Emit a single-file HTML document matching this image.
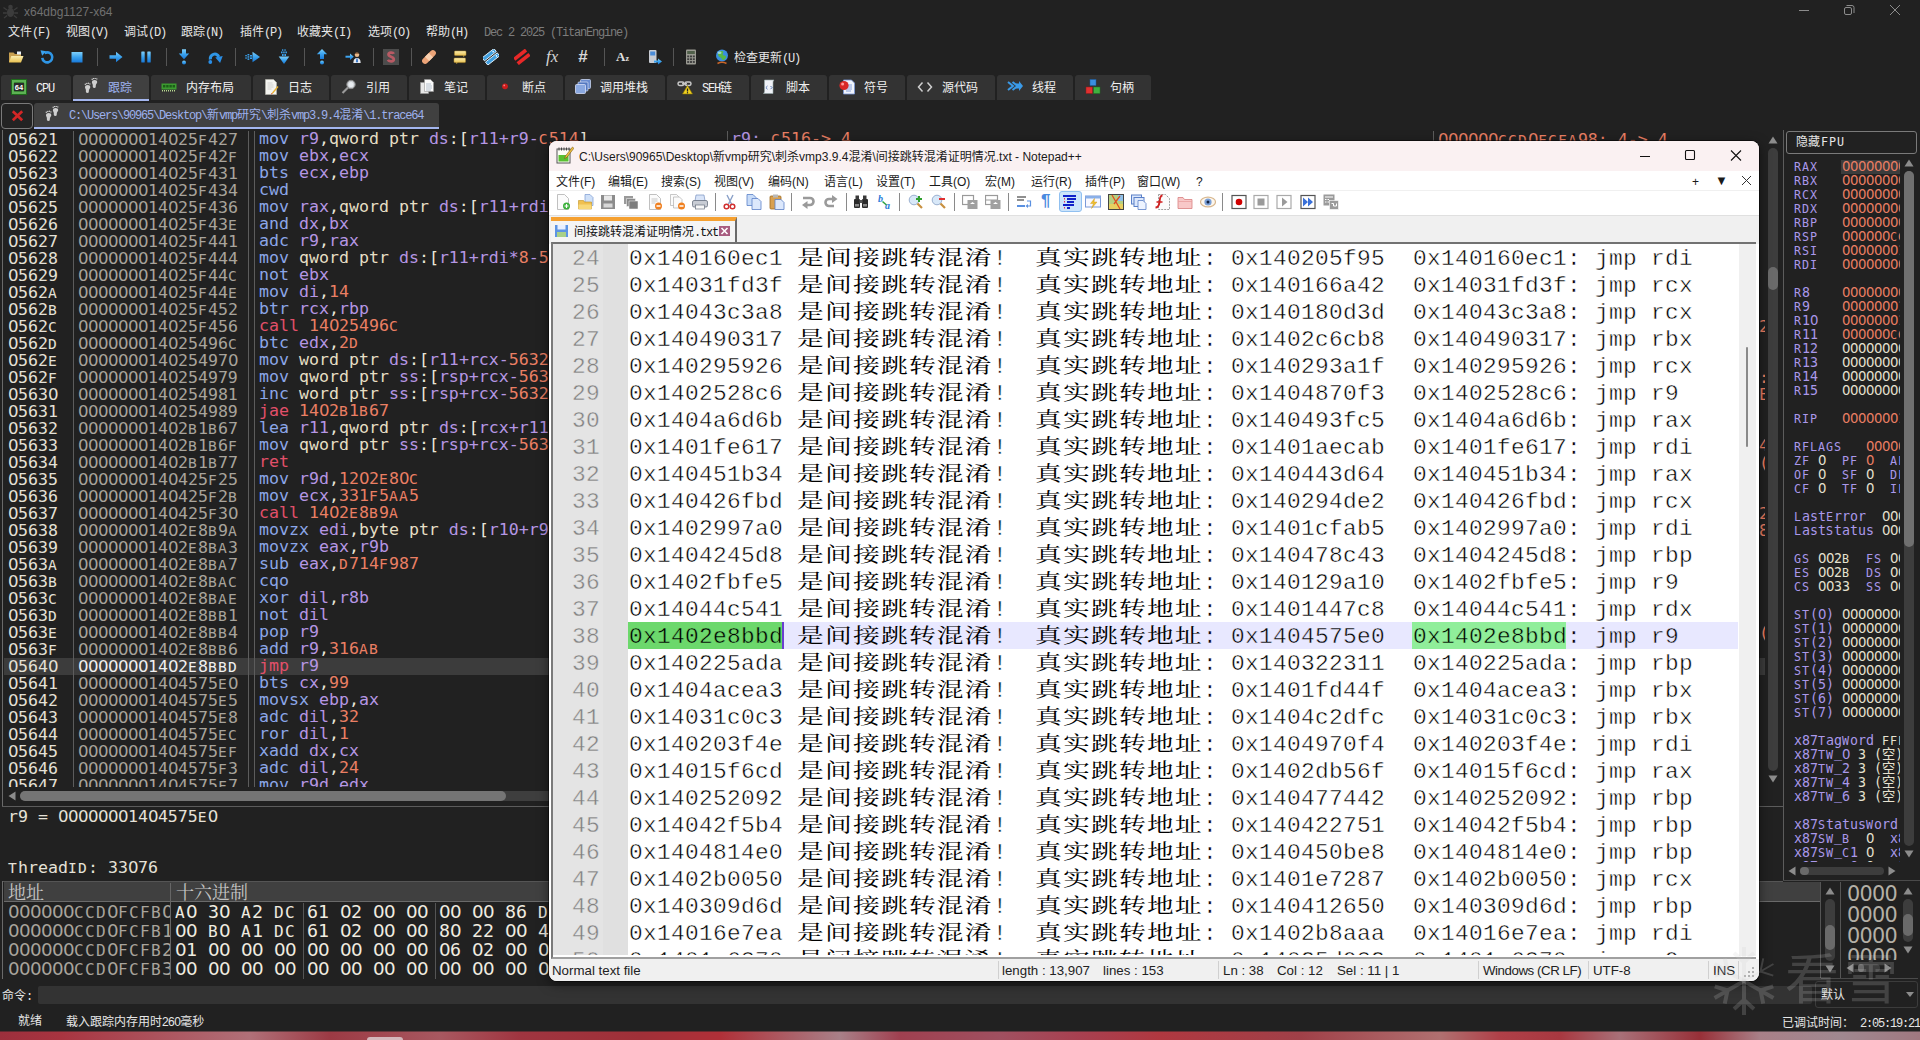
<!DOCTYPE html><html lang="zh"><head><meta charset="utf-8"><title>x64dbg</title><style>
*{box-sizing:border-box}
html,body{margin:0;padding:0}
body{width:1920px;height:1040px;background:#212121;position:relative;overflow:hidden;font-family:"Liberation Sans","Noto Sans CJK SC",sans-serif}
.a{position:absolute;white-space:pre}
.mono{font-family:"DejaVu Sans Mono","Liberation Mono",monospace}
.ui{font-family:"Liberation Mono","Noto Sans CJK SC",monospace;font-size:12px;color:#e6e6e6}
.dis{position:absolute;left:0;top:131px;width:1765px;height:656px;overflow:hidden;font-family:"DejaVu Sans Mono","Liberation Mono",monospace;font-size:16.6px;line-height:17px;letter-spacing:0}
.row{position:absolute;left:0;height:17px;width:1765px;white-space:pre}
.row span.c{position:absolute;top:0}
.row span.s{top:-1px}
.m{color:#8ba6e8}.j{color:#e2506a}.r{color:#b596e4}.n{color:#ea7f64}.k{color:#e6dfc4}.p{color:#e8e4d8}
.idx{color:#e4e0d6}.adr{color:#a8a49c}
.z{font-family:"DejaVu Sans",sans-serif;font-weight:normal;letter-spacing:-0.03418em}
.h{font-style:normal;font-size:.88em;letter-spacing:.0821em}
.vl{position:absolute;width:1px;background:#5c5c5c}
.hl{position:absolute;height:1px;background:#4a4a4a}
</style></head><body>
<div class="dis">
<div class="row" style="top:0px;">
<span class="c idx" style="left:8px"><b class="z">0</b>5621</span>
<span class="c adr" style="left:78px"><b class="z">0000000</b>14<b class="z">0</b>25<i class="h">F</i>427</span>
<span class="c s" style="left:259px"><span class="m">mov</span> <span class="r">r9</span><span class="p">,</span><span class="k">qword ptr </span><span class="r">ds</span><span class="p">:</span><span class="p">[</span><span class="r">r11</span><span class="r">+</span><span class="r">r9</span><span class="r">-</span><span class="n"><i class="h">C</i>514</span><span class="p">]</span></span>
<span class="c s" style="left:731px"><span class="r">r9: </span><span class="n"><i class="h">C</i>516-&gt; 4</span></span>
<span class="c n" style="left:1438px"><b class="z">000000</b><i class="h">CCD</i><b class="z">0</b><i class="h">FCFA</i>98: 4-&gt; 4</span>
</div>
<div class="row" style="top:17px;">
<span class="c idx" style="left:8px"><b class="z">0</b>5622</span>
<span class="c adr" style="left:78px"><b class="z">0000000</b>14<b class="z">0</b>25<i class="h">F</i>42<i class="h">F</i></span>
<span class="c s" style="left:259px"><span class="m">mov</span> <span class="r">ebx</span><span class="p">,</span><span class="r">ecx</span></span>
</div>
<div class="row" style="top:34px;">
<span class="c idx" style="left:8px"><b class="z">0</b>5623</span>
<span class="c adr" style="left:78px"><b class="z">0000000</b>14<b class="z">0</b>25<i class="h">F</i>431</span>
<span class="c s" style="left:259px"><span class="m">bts</span> <span class="r">ecx</span><span class="p">,</span><span class="r">ebp</span></span>
</div>
<div class="row" style="top:51px;">
<span class="c idx" style="left:8px"><b class="z">0</b>5624</span>
<span class="c adr" style="left:78px"><b class="z">0000000</b>14<b class="z">0</b>25<i class="h">F</i>434</span>
<span class="c s" style="left:259px"><span class="m">cwd</span></span>
</div>
<div class="row" style="top:68px;">
<span class="c idx" style="left:8px"><b class="z">0</b>5625</span>
<span class="c adr" style="left:78px"><b class="z">0000000</b>14<b class="z">0</b>25<i class="h">F</i>436</span>
<span class="c s" style="left:259px"><span class="m">mov</span> <span class="r">rax</span><span class="p">,</span><span class="k">qword ptr </span><span class="r">ds</span><span class="p">:</span><span class="p">[</span><span class="r">r11</span><span class="r">+</span><span class="r">rdi</span><span class="r">*</span><span class="n">8</span><span class="r">-</span><span class="n">5632</span><span class="p">]</span></span>
</div>
<div class="row" style="top:85px;">
<span class="c idx" style="left:8px"><b class="z">0</b>5626</span>
<span class="c adr" style="left:78px"><b class="z">0000000</b>14<b class="z">0</b>25<i class="h">F</i>43<i class="h">E</i></span>
<span class="c s" style="left:259px"><span class="m">and</span> <span class="r">dx</span><span class="p">,</span><span class="r">bx</span></span>
</div>
<div class="row" style="top:102px;">
<span class="c idx" style="left:8px"><b class="z">0</b>5627</span>
<span class="c adr" style="left:78px"><b class="z">0000000</b>14<b class="z">0</b>25<i class="h">F</i>441</span>
<span class="c s" style="left:259px"><span class="m">adc</span> <span class="r">r9</span><span class="p">,</span><span class="r">rax</span></span>
</div>
<div class="row" style="top:119px;">
<span class="c idx" style="left:8px"><b class="z">0</b>5628</span>
<span class="c adr" style="left:78px"><b class="z">0000000</b>14<b class="z">0</b>25<i class="h">F</i>444</span>
<span class="c s" style="left:259px"><span class="m">mov</span> <span class="k">qword ptr </span><span class="r">ds</span><span class="p">:</span><span class="p">[</span><span class="r">r11</span><span class="r">+</span><span class="r">rdi</span><span class="r">*</span><span class="n">8</span><span class="r">-</span><span class="n">5632</span><span class="p">]</span><span class="p">,</span><span class="r">r9</span></span>
</div>
<div class="row" style="top:136px;">
<span class="c idx" style="left:8px"><b class="z">0</b>5629</span>
<span class="c adr" style="left:78px"><b class="z">0000000</b>14<b class="z">0</b>25<i class="h">F</i>44<i class="h">C</i></span>
<span class="c s" style="left:259px"><span class="m">not</span> <span class="r">ebx</span></span>
</div>
<div class="row" style="top:153px;">
<span class="c idx" style="left:8px"><b class="z">0</b>562<i class="h">A</i></span>
<span class="c adr" style="left:78px"><b class="z">0000000</b>14<b class="z">0</b>25<i class="h">F</i>44<i class="h">E</i></span>
<span class="c s" style="left:259px"><span class="m">mov</span> <span class="r">di</span><span class="p">,</span><span class="n">14</span></span>
</div>
<div class="row" style="top:170px;">
<span class="c idx" style="left:8px"><b class="z">0</b>562<i class="h">B</i></span>
<span class="c adr" style="left:78px"><b class="z">0000000</b>14<b class="z">0</b>25<i class="h">F</i>452</span>
<span class="c s" style="left:259px"><span class="m">btr</span> <span class="r">rcx</span><span class="p">,</span><span class="r">rbp</span></span>
</div>
<div class="row" style="top:187px;">
<span class="c idx" style="left:8px"><b class="z">0</b>562<i class="h">C</i></span>
<span class="c adr" style="left:78px"><b class="z">0000000</b>14<b class="z">0</b>25<i class="h">F</i>456</span>
<span class="c s" style="left:259px"><span class="j">call</span> <span class="n">14<b class="z">0</b>25496<i class="h">C</i></span></span>
<span class="c n" style="left:1759px">2</span>
</div>
<div class="row" style="top:204px;">
<span class="c idx" style="left:8px"><b class="z">0</b>562<i class="h">D</i></span>
<span class="c adr" style="left:78px"><b class="z">0000000</b>14<b class="z">0</b>25496<i class="h">C</i></span>
<span class="c s" style="left:259px"><span class="m">btc</span> <span class="r">edx</span><span class="p">,</span><span class="n">2<i class="h">D</i></span></span>
</div>
<div class="row" style="top:221px;">
<span class="c idx" style="left:8px"><b class="z">0</b>562<i class="h">E</i></span>
<span class="c adr" style="left:78px"><b class="z">0000000</b>14<b class="z">0</b>25497<b class="z">0</b></span>
<span class="c s" style="left:259px"><span class="m">mov</span> <span class="k">word ptr </span><span class="r">ds</span><span class="p">:</span><span class="p">[</span><span class="r">r11</span><span class="r">+</span><span class="r">rcx</span><span class="r">-</span><span class="n">5632</span><span class="p">]</span><span class="p">,</span><span class="r">dx</span></span>
</div>
<div class="row" style="top:238px;">
<span class="c idx" style="left:8px"><b class="z">0</b>562<i class="h">F</i></span>
<span class="c adr" style="left:78px"><b class="z">0000000</b>14<b class="z">0</b>254979</span>
<span class="c s" style="left:259px"><span class="m">mov</span> <span class="k">qword ptr </span><span class="r">ss</span><span class="p">:</span><span class="p">[</span><span class="r">rsp</span><span class="r">+</span><span class="r">rcx</span><span class="r">-</span><span class="n">5632</span><span class="p">]</span><span class="p">,</span><span class="r">r9</span></span>
<span class="c n" style="left:1759px">:</span>
</div>
<div class="row" style="top:255px;">
<span class="c idx" style="left:8px"><b class="z">0</b>563<b class="z">0</b></span>
<span class="c adr" style="left:78px"><b class="z">0000000</b>14<b class="z">0</b>254981</span>
<span class="c s" style="left:259px"><span class="m">inc</span> <span class="k">word ptr </span><span class="r">ss</span><span class="p">:</span><span class="p">[</span><span class="r">rsp</span><span class="r">+</span><span class="r">rcx</span><span class="r">-</span><span class="n">5632</span><span class="p">]</span></span>
<span class="c n" style="left:1759px">E</span>
</div>
<div class="row" style="top:272px;">
<span class="c idx" style="left:8px"><b class="z">0</b>5631</span>
<span class="c adr" style="left:78px"><b class="z">0000000</b>14<b class="z">0</b>254989</span>
<span class="c s" style="left:259px"><span class="j">jae</span> <span class="n">14<b class="z">0</b>2<i class="h">B</i>1<i class="h">B</i>67</span></span>
</div>
<div class="row" style="top:289px;">
<span class="c idx" style="left:8px"><b class="z">0</b>5632</span>
<span class="c adr" style="left:78px"><b class="z">0000000</b>14<b class="z">0</b>2<i class="h">B</i>1<i class="h">B</i>67</span>
<span class="c s" style="left:259px"><span class="m">lea</span> <span class="r">r11</span><span class="p">,</span><span class="k">qword ptr </span><span class="r">ds</span><span class="p">:</span><span class="p">[</span><span class="r">rcx</span><span class="r">+</span><span class="r">r11</span><span class="r">-</span><span class="n">5632</span><span class="p">]</span></span>
</div>
<div class="row" style="top:306px;">
<span class="c idx" style="left:8px"><b class="z">0</b>5633</span>
<span class="c adr" style="left:78px"><b class="z">0000000</b>14<b class="z">0</b>2<i class="h">B</i>1<i class="h">B</i>6<i class="h">F</i></span>
<span class="c s" style="left:259px"><span class="m">mov</span> <span class="k">qword ptr </span><span class="r">ss</span><span class="p">:</span><span class="p">[</span><span class="r">rsp</span><span class="r">+</span><span class="r">rcx</span><span class="r">-</span><span class="n">5632</span><span class="p">]</span><span class="p">,</span><span class="r">rax</span></span>
<span class="c n" style="left:1759px">4</span>
</div>
<div class="row" style="top:323px;">
<span class="c idx" style="left:8px"><b class="z">0</b>5634</span>
<span class="c adr" style="left:78px"><b class="z">0000000</b>14<b class="z">0</b>2<i class="h">B</i>1<i class="h">B</i>77</span>
<span class="c s" style="left:259px"><span class="j">ret</span></span>
<span class="c n" style="left:1759px">(</span>
</div>
<div class="row" style="top:340px;">
<span class="c idx" style="left:8px"><b class="z">0</b>5635</span>
<span class="c adr" style="left:78px"><b class="z">0000000</b>14<b class="z">0</b>425<i class="h">F</i>25</span>
<span class="c s" style="left:259px"><span class="m">mov</span> <span class="r">r9d</span><span class="p">,</span><span class="n">12<b class="z">0</b>2<i class="h">E</i>8<b class="z">0</b><i class="h">C</i></span></span>
</div>
<div class="row" style="top:357px;">
<span class="c idx" style="left:8px"><b class="z">0</b>5636</span>
<span class="c adr" style="left:78px"><b class="z">0000000</b>14<b class="z">0</b>425<i class="h">F</i>2<i class="h">B</i></span>
<span class="c s" style="left:259px"><span class="m">mov</span> <span class="r">ecx</span><span class="p">,</span><span class="n">331<i class="h">F</i>5<i class="h">AA</i>5</span></span>
</div>
<div class="row" style="top:374px;">
<span class="c idx" style="left:8px"><b class="z">0</b>5637</span>
<span class="c adr" style="left:78px"><b class="z">0000000</b>14<b class="z">0</b>425<i class="h">F</i>3<b class="z">0</b></span>
<span class="c s" style="left:259px"><span class="j">call</span> <span class="n">14<b class="z">0</b>2<i class="h">E</i>8<i class="h">B</i>9<i class="h">A</i></span></span>
<span class="c n" style="left:1759px">2</span>
</div>
<div class="row" style="top:391px;">
<span class="c idx" style="left:8px"><b class="z">0</b>5638</span>
<span class="c adr" style="left:78px"><b class="z">0000000</b>14<b class="z">0</b>2<i class="h">E</i>8<i class="h">B</i>9<i class="h">A</i></span>
<span class="c s" style="left:259px"><span class="m">movzx</span> <span class="r">edi</span><span class="p">,</span><span class="k">byte ptr </span><span class="r">ds</span><span class="p">:</span><span class="p">[</span><span class="r">r10</span><span class="r">+</span><span class="r">r9</span><span class="p">]</span></span>
<span class="c n" style="left:1759px">8</span>
</div>
<div class="row" style="top:408px;">
<span class="c idx" style="left:8px"><b class="z">0</b>5639</span>
<span class="c adr" style="left:78px"><b class="z">0000000</b>14<b class="z">0</b>2<i class="h">E</i>8<i class="h">BA</i>3</span>
<span class="c s" style="left:259px"><span class="m">movzx</span> <span class="r">eax</span><span class="p">,</span><span class="r">r9b</span></span>
</div>
<div class="row" style="top:425px;">
<span class="c idx" style="left:8px"><b class="z">0</b>563<i class="h">A</i></span>
<span class="c adr" style="left:78px"><b class="z">0000000</b>14<b class="z">0</b>2<i class="h">E</i>8<i class="h">BA</i>7</span>
<span class="c s" style="left:259px"><span class="m">sub</span> <span class="r">eax</span><span class="p">,</span><span class="n"><i class="h">D</i>714<i class="h">F</i>987</span></span>
</div>
<div class="row" style="top:442px;">
<span class="c idx" style="left:8px"><b class="z">0</b>563<i class="h">B</i></span>
<span class="c adr" style="left:78px"><b class="z">0000000</b>14<b class="z">0</b>2<i class="h">E</i>8<i class="h">BAC</i></span>
<span class="c s" style="left:259px"><span class="m">cqo</span></span>
</div>
<div class="row" style="top:459px;">
<span class="c idx" style="left:8px"><b class="z">0</b>563<i class="h">C</i></span>
<span class="c adr" style="left:78px"><b class="z">0000000</b>14<b class="z">0</b>2<i class="h">E</i>8<i class="h">BAE</i></span>
<span class="c s" style="left:259px"><span class="m">xor</span> <span class="r">dil</span><span class="p">,</span><span class="r">r8b</span></span>
</div>
<div class="row" style="top:476px;">
<span class="c idx" style="left:8px"><b class="z">0</b>563<i class="h">D</i></span>
<span class="c adr" style="left:78px"><b class="z">0000000</b>14<b class="z">0</b>2<i class="h">E</i>8<i class="h">BB</i>1</span>
<span class="c s" style="left:259px"><span class="m">not</span> <span class="r">dil</span></span>
</div>
<div class="row" style="top:493px;">
<span class="c idx" style="left:8px"><b class="z">0</b>563<i class="h">E</i></span>
<span class="c adr" style="left:78px"><b class="z">0000000</b>14<b class="z">0</b>2<i class="h">E</i>8<i class="h">BB</i>4</span>
<span class="c s" style="left:259px"><span class="m">pop</span> <span class="r">r9</span></span>
<span class="c n" style="left:1759px">(</span>
</div>
<div class="row" style="top:510px;">
<span class="c idx" style="left:8px"><b class="z">0</b>563<i class="h">F</i></span>
<span class="c adr" style="left:78px"><b class="z">0000000</b>14<b class="z">0</b>2<i class="h">E</i>8<i class="h">BB</i>6</span>
<span class="c s" style="left:259px"><span class="m">add</span> <span class="r">r9</span><span class="p">,</span><span class="n">316<i class="h">AB</i></span></span>
</div>
<div class="row" style="top:527px;background:#3c3c3c;">
<span class="c idx" style="left:8px"><b class="z">0</b>564<b class="z">0</b></span>
<span class="c adr" style="left:78px;color:#f0f0f0"><b class="z">0000000</b>14<b class="z">0</b>2<i class="h">E</i>8<i class="h">BBD</i></span>
<span class="c s" style="left:259px"><span class="j">jmp</span> <span class="r">r9</span></span>
</div>
<div class="row" style="top:544px;">
<span class="c idx" style="left:8px"><b class="z">0</b>5641</span>
<span class="c adr" style="left:78px"><b class="z">0000000</b>14<b class="z">0</b>4575<i class="h">E</i><b class="z">0</b></span>
<span class="c s" style="left:259px"><span class="m">bts</span> <span class="r">cx</span><span class="p">,</span><span class="n">99</span></span>
</div>
<div class="row" style="top:561px;">
<span class="c idx" style="left:8px"><b class="z">0</b>5642</span>
<span class="c adr" style="left:78px"><b class="z">0000000</b>14<b class="z">0</b>4575<i class="h">E</i>5</span>
<span class="c s" style="left:259px"><span class="m">movsx</span> <span class="r">ebp</span><span class="p">,</span><span class="r">ax</span></span>
</div>
<div class="row" style="top:578px;">
<span class="c idx" style="left:8px"><b class="z">0</b>5643</span>
<span class="c adr" style="left:78px"><b class="z">0000000</b>14<b class="z">0</b>4575<i class="h">E</i>8</span>
<span class="c s" style="left:259px"><span class="m">adc</span> <span class="r">dil</span><span class="p">,</span><span class="n">32</span></span>
</div>
<div class="row" style="top:595px;">
<span class="c idx" style="left:8px"><b class="z">0</b>5644</span>
<span class="c adr" style="left:78px"><b class="z">0000000</b>14<b class="z">0</b>4575<i class="h">EC</i></span>
<span class="c s" style="left:259px"><span class="m">ror</span> <span class="r">dil</span><span class="p">,</span><span class="n">1</span></span>
</div>
<div class="row" style="top:612px;">
<span class="c idx" style="left:8px"><b class="z">0</b>5645</span>
<span class="c adr" style="left:78px"><b class="z">0000000</b>14<b class="z">0</b>4575<i class="h">EF</i></span>
<span class="c s" style="left:259px"><span class="m">xadd</span> <span class="r">dx</span><span class="p">,</span><span class="r">cx</span></span>
</div>
<div class="row" style="top:629px;">
<span class="c idx" style="left:8px"><b class="z">0</b>5646</span>
<span class="c adr" style="left:78px"><b class="z">0000000</b>14<b class="z">0</b>4575<i class="h">F</i>3</span>
<span class="c s" style="left:259px"><span class="m">adc</span> <span class="r">dil</span><span class="p">,</span><span class="n">24</span></span>
</div>
<div class="row" style="top:646px;">
<span class="c idx" style="left:8px"><b class="z">0</b>5647</span>
<span class="c adr" style="left:78px"><b class="z">0000000</b>14<b class="z">0</b>4575<i class="h">F</i>7</span>
<span class="c s" style="left:259px"><span class="m">mov</span> <span class="r">r9d</span><span class="p">,</span><span class="r">edx</span></span>
</div>
<div class="vl" style="left:73px;top:0;height:656px"></div>
<div class="vl" style="left:248px;top:0;height:656px"></div>
<div class="vl" style="left:254px;top:0;height:656px"></div>
<div class="vl" style="left:727px;top:0;height:656px"></div>
<div class="vl" style="left:1433px;top:0;height:656px"></div>
</div>
<style>.l{letter-spacing:-1.2px}.ui{line-height:14px}</style>
<svg class="a" style="left:2px;top:3px" width="17" height="16" viewBox="0 0 17 16"><g fill="#3c3c3c"><ellipse cx="8.5" cy="9.5" rx="3.6" ry="4.6"/><circle cx="8.5" cy="4" r="2.3"/></g><g stroke="#3c3c3c" stroke-width="1.3" fill="none"><path d="M5 7 L1.5 4.5M12 7l3.5-2.5M4.8 10H1M12.2 10H16M5.2 12.5L2 15M11.8 12.5L15 15"/></g></svg>
<span class="a" style="left:24px;top:5px;font:12px/14px 'Liberation Sans',sans-serif;color:#707070">x64dbg1127-x64</span>
<svg class="a" style="left:1790px;top:0" width="130" height="22" viewBox="0 0 130 22"><g stroke="#8c8c8c" stroke-width="1" fill="none"><path d="M9 10.5h10"/><rect x="54.5" y="7.5" width="7" height="7" rx="1.5"/><path d="M56.5 5.5h5.5a2 2 0 0 1 2 2v5.5"/><path d="M100 5l10 10M110 5l-10 10"/></g></svg>
<span class="a ui" style="left:8px;top:26px;color:#e6e6e6;">文件<span class="l">(F)</span></span>
<span class="a ui" style="left:66px;top:26px;color:#e6e6e6;">视图<span class="l">(V)</span></span>
<span class="a ui" style="left:124px;top:26px;color:#e6e6e6;">调试<span class="l">(D)</span></span>
<span class="a ui" style="left:181px;top:26px;color:#e6e6e6;">跟踪<span class="l">(N)</span></span>
<span class="a ui" style="left:240px;top:26px;color:#e6e6e6;">插件<span class="l">(P)</span></span>
<span class="a ui" style="left:297px;top:26px;color:#e6e6e6;">收藏夹<span class="l">(I)</span></span>
<span class="a ui" style="left:368px;top:26px;color:#e6e6e6;">选项<span class="l">(O)</span></span>
<span class="a ui" style="left:426px;top:26px;color:#e6e6e6;">帮助<span class="l">(H)</span></span>
<span class="a ui" style="left:484px;top:26px;color:#7c7c7c;"><span class="l">Dec 2 2025 (TitanEngine)</span></span>
<svg width="0" height="0" style="position:absolute"><defs><linearGradient id="gb" x1="0" y1="0" x2="0" y2="1"><stop offset="0" stop-color="#7fd0fb"/><stop offset=".5" stop-color="#3aa2ee"/><stop offset="1" stop-color="#1878d8"/></linearGradient><linearGradient id="gy" x1="0" y1="0" x2="0" y2="1"><stop offset="0" stop-color="#fbeeb0"/><stop offset="1" stop-color="#e8c050"/></linearGradient></defs></svg>
<svg class="a" style="left:8px;top:49px" width="16" height="16" viewBox="0 0 16 16"><path d="M1 3.500h4.500l1.500 1.500H13V13H1z" fill="#c8a050"/><path d="M9 2.500h4v3h-4z" fill="#e8f0f8"/><path d="M1 13.500l2.300-6.500H15.500L13 13.500z" fill="url(#gy)"/></svg>
<svg class="a" style="left:39px;top:49px" width="16" height="16" viewBox="0 0 16 16"><path d="M3.300 8.800a5 5 0 1 0 2.200-4.600" fill="none" stroke="#2f96e6" stroke-width="2.600"/><path d="M1.500 1.200l5.500 1-3.800 4.600z" fill="#3aa2ee"/></svg>
<svg class="a" style="left:69px;top:49px" width="16" height="16" viewBox="0 0 16 16"><rect x="2.500" y="3" width="11" height="10.500" fill="url(#gb)"/></svg>
<svg class="a" style="left:108px;top:49px" width="16" height="16" viewBox="0 0 16 16"><path d="M1.500 6.300h6.500v-3.600l6.500 5.300-6.500 5.300v-3.600h-6.500z" fill="url(#gb)"/></svg>
<svg class="a" style="left:138px;top:49px" width="16" height="16" viewBox="0 0 16 16"><rect x="3.300" y="2.500" width="3.400" height="11" rx=".6" fill="url(#gb)"/><rect x="9.300" y="2.500" width="3.400" height="11" rx=".6" fill="url(#gb)"/></svg>
<svg class="a" style="left:176px;top:49px" width="16" height="16" viewBox="0 0 16 16"><path d="M6 0.300h4v4.200h3.200l-5.200 5.700-5.200-5.700h3.200z" fill="url(#gb)"/><circle cx="8" cy="13.500" r="2" fill="url(#gb)"/></svg>
<svg class="a" style="left:207px;top:49px" width="16" height="16" viewBox="0 0 16 16"><path d="M3.300 10.500c-.5-5.500 6-7.500 8.500-2.500" fill="none" stroke="#2f96e6" stroke-width="3"/><path d="M8.300 8.500l7.400-1.500-2.600 7z" fill="#2a8ee6"/><circle cx="3.300" cy="13" r="1.900" fill="#2a8ee6"/></svg>
<svg class="a" style="left:245px;top:49px" width="16" height="16" viewBox="0 0 16 16"><path d="M7.500 6v-3.300l7.500 5.300-7.500 5.300v-3.300z" fill="url(#gb)"/><g fill="#3aa2ee"><rect x="5" y="6" width="2" height="1.600"/><rect x="5" y="8.400" width="2" height="1.600"/><rect x="2.500" y="5" width="1.800" height="1.500"/><rect x="2.500" y="7.200" width="1.800" height="1.500"/><rect x="2.500" y="9.400" width="1.800" height="1.500"/><rect x="0.300" y="6" width="1.500" height="1.300"/><rect x="0.300" y="8.400" width="1.500" height="1.300"/></g></svg>
<svg class="a" style="left:276px;top:49px" width="16" height="16" viewBox="0 0 16 16"><path d="M6 7.500h-3.300l5.300 7.500 5.300-7.500h-3.300z" fill="url(#gb)"/><g fill="#3aa2ee"><rect x="6" y="5" width="1.600" height="2"/><rect x="8.400" y="5" width="1.600" height="2"/><rect x="5" y="2.500" width="1.500" height="1.800"/><rect x="7.200" y="2.500" width="1.500" height="1.800"/><rect x="9.400" y="2.500" width="1.500" height="1.800"/><rect x="6" y="0.300" width="1.300" height="1.500"/><rect x="8.400" y="0.300" width="1.300" height="1.500"/></g></svg>
<svg class="a" style="left:314px;top:49px" width="16" height="16" viewBox="0 0 16 16"><path d="M6 10v-4.800h-3.200l5.200-5.200 5.200 5.200h-3.200v4.800z" fill="url(#gb)"/><circle cx="8" cy="13.500" r="2" fill="url(#gb)"/></svg>
<svg class="a" style="left:345px;top:49px" width="16" height="16" viewBox="0 0 16 16"><path d="M0.500 6.800h4.500v-2.300l3.800 3.300-3.800 3.300v-2.300h-4.500z" fill="url(#gb)"/><circle cx="12" cy="5.800" r="2.300" fill="#e8b88a"/><path d="M9.800 5c.4-2 4-2 4.400 0-.8-.8-3.600-.8-4.400 0z" fill="#6a4020"/><path d="M8.300 14c0-3.300 1.500-5 3.700-5s3.700 1.700 3.700 5z" fill="#e4e8ee"/><path d="M11.300 9.500h1.400l.4 3.300-1.100 1-1.100-1z" fill="#3a78c8"/></svg>
<svg class="a" style="left:383px;top:49px" width="16" height="16" viewBox="0 0 16 16"><rect x="0" y="0" width="16" height="16" fill="#4c4c4c"/><path d="M10.800 4.800c-.8-1.700-5.300-1.900-5.300 .8 0 2.600 5.300 1.700 5.300 4.700 0 2.700-4.800 2.600-6 .6" fill="none" stroke="#b85a64" stroke-width="2.700"/></svg>
<svg class="a" style="left:421px;top:49px" width="16" height="16" viewBox="0 0 16 16"><g transform="rotate(-45 8 8)"><rect x="-.5" y="5" width="17" height="6" rx="3" fill="#eca478"/><rect x="5.300" y="5" width="5.400" height="6" fill="#f8d0b0"/></g></svg>
<svg class="a" style="left:452px;top:49px" width="16" height="16" viewBox="0 0 16 16"><rect x="2.500" y="2" width="11.500" height="4.600" rx=".8" fill="url(#gy)" stroke="#b89030" stroke-width=".5"/><path d="M11 6.600l.8 1.500 .8-1.500z" fill="#e8c050"/><rect x="2" y="9" width="11.500" height="4.600" rx=".8" fill="url(#gy)" stroke="#b89030" stroke-width=".5"/><path d="M4 13.600l.8 1.500 .8-1.500z" fill="#e8c050"/></svg>
<svg class="a" style="left:483px;top:49px" width="16" height="16" viewBox="0 0 16 16"><g transform="rotate(-38 8 8)"><rect x="0.500" y="3.200" width="15" height="3.800" fill="#3f9fe0" stroke="#e0f0fa" stroke-width=".9"/><rect x="0.500" y="8.600" width="15" height="3.800" fill="#3f9fe0" stroke="#e0f0fa" stroke-width=".9"/><circle cx="13" cy="5.100" r=".8" fill="#fff"/><circle cx="13" cy="10.500" r=".8" fill="#fff"/></g></svg>
<svg class="a" style="left:514px;top:49px" width="16" height="16" viewBox="0 0 16 16"><g transform="rotate(-38 8 8)"><rect x="0.500" y="3.200" width="15" height="3.600" fill="#e82828"/><rect x="0.500" y="8.800" width="15" height="3.600" fill="#e82828"/></g></svg>
<span class="a" style="left:546px;top:46px;font:italic 17px/22px 'Liberation Serif',serif;color:#d4d4d4">fx</span>
<span class="a" style="left:578px;top:47px;font:italic bold 17px/20px 'Liberation Sans',sans-serif;color:#d8d8d8">#</span>
<span class="a" style="left:616px;top:48px;font:bold 13px/18px 'Liberation Serif',serif;color:#e0e0e0">A<span style="font-size:8px">z</span></span>
<svg class="a" style="left:647px;top:49px" width="16" height="16" viewBox="0 0 16 16"><rect x="2" y="1" width="7.500" height="13" rx="1" fill="#c8ccd4"/><rect x="3.200" y="2.500" width="5" height="4" fill="#4a8cd8"/><path d="M7 11.500h4v-2l4 3-4 3v-2h-4z" fill="url(#gb)"/></svg>
<svg class="a" style="left:683px;top:49px" width="16" height="16" viewBox="0 0 16 16"><rect x="3" y="0.500" width="10" height="15" rx="1" fill="#9a9a92"/><rect x="4.200" y="2" width="7.600" height="3" fill="#50604a"/><g fill="#3c3c3c"><rect x="4.200" y="6.500" width="2" height="1.800"/><rect x="7" y="6.500" width="2" height="1.800"/><rect x="9.800" y="6.500" width="2" height="1.800"/><rect x="4.200" y="9.300" width="2" height="1.800"/><rect x="7" y="9.300" width="2" height="1.800"/><rect x="9.800" y="9.300" width="2" height="1.800"/><rect x="4.200" y="12.100" width="2" height="1.800"/><rect x="7" y="12.100" width="2" height="1.800"/><rect x="9.800" y="12.100" width="2" height="1.800"/></g></svg>
<svg class="a" style="left:714px;top:49px" width="16" height="16" viewBox="0 0 16 16"><circle cx="8" cy="6.500" r="6" fill="#3a8ee0"/><path d="M4 4c1.500-2 4-2.500 5-1.500s-1 2.500 0 3.500 2.500 0 3 1.500-1.500 3.500-3 3.500-1-2-2.500-2.500-3-2-2.500-4.500z" fill="#58b848"/><ellipse cx="5.500" cy="3.800" rx="2" ry="1.200" fill="#bfe0ff" opacity=".7"/><path d="M3.500 14.500q4.500-2.500 9 0" stroke="#c86428" stroke-width="1.600" fill="none"/></svg>
<span class="a ui" style="left:734px;top:52px;color:#e6e6e6;">检查更新<span class="l">(U)</span></span>
<div class="a" style="left:97px;top:48px;width:1px;height:18px;background:#555"></div>
<div class="a" style="left:166px;top:48px;width:1px;height:18px;background:#555"></div>
<div class="a" style="left:235px;top:48px;width:1px;height:18px;background:#555"></div>
<div class="a" style="left:304px;top:48px;width:1px;height:18px;background:#555"></div>
<div class="a" style="left:373px;top:48px;width:1px;height:18px;background:#555"></div>
<div class="a" style="left:411px;top:48px;width:1px;height:18px;background:#555"></div>
<div class="a" style="left:604px;top:48px;width:1px;height:18px;background:#555"></div>
<div class="a" style="left:673px;top:48px;width:1px;height:18px;background:#555"></div>
<div class="a" style="left:1px;top:75px;width:70px;height:25px;background:#333333;border-radius:3px 3px 0 0;"></div>
<svg class="a" style="left:11px;top:79px" width="16" height="16" viewBox="0 0 16 16"><rect x="0.500" y="0.500" width="15" height="15" fill="#3fa03a" stroke="#1f6a1c"/><rect x="2.800" y="3.800" width="10.400" height="8.400" rx="1" fill="#2a2a2a"/><path d="M2 1.500v1M4 1.500v1M6 1.500v1M8 1.500v1M10 1.500v1M12 1.500v1M14 1.500v1M2 13.500v1M4 13.500v1M6 13.500v1M8 13.500v1M10 13.500v1M12 13.500v1M14 13.500v1M1.500 4h1M1.500 6h1M1.500 8h1M1.500 10h1M1.500 12h1M13.500 4h1M13.500 6h1M13.500 8h1M13.500 10h1M13.500 12h1" stroke="#c8f0b0" stroke-width=".9"/><text x="8" y="10.800" font-family="Liberation Sans,sans-serif" font-weight="bold" font-size="7.500" fill="#fff" text-anchor="middle">64</text></svg>
<span class="a ui" style="left:36px;top:82px;color:#f0f0f0;"><span class="l">CPU</span></span>
<div class="a" style="left:73px;top:75px;width:76px;height:26px;background:#404040;border-radius:3px 3px 0 0;border-bottom:2px solid #a4b6ee;"></div>
<svg class="a" style="left:83px;top:78px" width="16" height="16" viewBox="0 0 16 16"><g fill="#cfcfcf"><path d="M2 9.200c0-1.500 1.200-2.300 2.700-2.300s2.700 .8 2.600 2.300c-.1 1.300-1.300 1.900-1.400 3.200-.1 1.200 .2 2.500-1.400 2.500s-1.700-1.300-1.600-2.500c.1-1.300-.9-1.900-.9-3.200z"/><circle cx="2.300" cy="6.300" r=".75"/><circle cx="3.800" cy="5.500" r=".75"/><circle cx="5.400" cy="5.300" r=".75"/><circle cx="6.900" cy="5.900" r=".7"/><g transform="translate(6.900 -5)"><path d="M2 9.200c0-1.500 1.200-2.300 2.700-2.300s2.700 .8 2.600 2.300c-.1 1.300-1.300 1.900-1.400 3.200-.1 1.200 .2 2.500-1.400 2.500s-1.700-1.300-1.600-2.500c.1-1.300-.9-1.900-.9-3.200z"/><circle cx="2.300" cy="6.300" r=".75"/><circle cx="3.800" cy="5.500" r=".75"/><circle cx="5.400" cy="5.300" r=".75"/><circle cx="6.900" cy="5.900" r=".7"/></g></g></svg>
<span class="a ui" style="left:108px;top:82px;color:#9db1ee;">跟踪</span>
<div class="a" style="left:151px;top:75px;width:100px;height:25px;background:#333333;border-radius:3px 3px 0 0;"></div>
<svg class="a" style="left:161px;top:79px" width="16" height="16" viewBox="0 0 16 16"><rect x="0.500" y="4.500" width="15" height="6" fill="#3c9c30"/><g fill="#1c5c18"><rect x="2" y="6" width="2.400" height="2.500"/><rect x="5.200" y="6" width="2.400" height="2.500"/><rect x="8.400" y="6" width="2.400" height="2.500"/><rect x="11.600" y="6" width="2.400" height="2.500"/></g><path d="M1.500 11v1.500M3.500 11v1.500M5.500 11v1.500M7.500 11v1.500M9.500 11v1.500M11.500 11v1.500M13.500 11v1.500" stroke="#b8d890" stroke-width="1"/></svg>
<span class="a ui" style="left:186px;top:82px;color:#f0f0f0;">内存布局</span>
<div class="a" style="left:253px;top:75px;width:76px;height:25px;background:#333333;border-radius:3px 3px 0 0;"></div>
<svg class="a" style="left:263px;top:79px" width="16" height="16" viewBox="0 0 16 16"><path d="M2.500 0.500h8l3 3v12h-11z" fill="#f4f4f0" stroke="#b8b8b0" stroke-width=".6"/><path d="M4.500 4h5M4.500 6h6M4.500 8h6M4.500 10h4" stroke="#c0c0c0" stroke-width=".7"/><path d="M14.500 7l-5 6-1.500 2.500 2.500-1.500 5-6z" fill="#e8b030"/><path d="M8 15.500l.6-1.600 1 .9z" fill="#d04020"/></svg>
<span class="a ui" style="left:288px;top:82px;color:#f0f0f0;">日志</span>
<div class="a" style="left:331px;top:75px;width:76px;height:25px;background:#333333;border-radius:3px 3px 0 0;"></div>
<svg class="a" style="left:341px;top:79px" width="16" height="16" viewBox="0 0 16 16"><circle cx="10" cy="5.500" r="4.200" fill="#c8ccd0" stroke="#888" stroke-width="1"/><circle cx="10" cy="5.500" r="2.600" fill="#e8ecf0"/><path d="M7 8.500l-5.500 5.500" stroke="#9a9a9a" stroke-width="2.200"/></svg>
<span class="a ui" style="left:366px;top:82px;color:#f0f0f0;">引用</span>
<div class="a" style="left:409px;top:75px;width:76px;height:25px;background:#333333;border-radius:3px 3px 0 0;"></div>
<svg class="a" style="left:419px;top:79px" width="16" height="16" viewBox="0 0 16 16"><path d="M1.500 3.500h8v11h-8z" fill="#e8e8e8" stroke="#999" stroke-width=".6"/><path d="M5.500 0.500h6l3 3v9h-9z" fill="#fafafa" stroke="#999" stroke-width=".6"/><path d="M7 5h5M7 7h6M7 9h6M7 11h5" stroke="#9ab" stroke-width=".7"/></svg>
<span class="a ui" style="left:444px;top:82px;color:#f0f0f0;">笔记</span>
<div class="a" style="left:487px;top:75px;width:76px;height:25px;background:#333333;border-radius:3px 3px 0 0;"></div>
<svg class="a" style="left:497px;top:79px" width="16" height="16" viewBox="0 0 16 16"><circle cx="8" cy="7.300" r="2.900" fill="#cc1c1c"/><circle cx="7.200" cy="6.400" r=".9" fill="#f08080"/></svg>
<span class="a ui" style="left:522px;top:82px;color:#f0f0f0;">断点</span>
<div class="a" style="left:565px;top:75px;width:100px;height:25px;background:#333333;border-radius:3px 3px 0 0;"></div>
<svg class="a" style="left:575px;top:79px" width="16" height="16" viewBox="0 0 16 16"><rect x="5.500" y="0.500" width="10" height="9" rx="1" fill="#6a8cd0" stroke="#c8d4f0" stroke-width=".8"/><rect x="3" y="3" width="10" height="9" rx="1" fill="#5478c0" stroke="#c8d4f0" stroke-width=".8"/><rect x="0.500" y="5.500" width="10" height="9" rx="1" fill="#8aa8e0" stroke="#d8e0f8" stroke-width=".8"/></svg>
<span class="a ui" style="left:600px;top:82px;color:#f0f0f0;">调用堆栈</span>
<div class="a" style="left:667px;top:75px;width:82px;height:25px;background:#333333;border-radius:3px 3px 0 0;"></div>
<svg class="a" style="left:677px;top:79px" width="16" height="16" viewBox="0 0 16 16"><g fill="none" stroke="#c8c8c8" stroke-width="1.500"><rect x="1" y="3" width="6" height="3.500" rx="1.700"/><rect x="8" y="3" width="6" height="3.500" rx="1.700"/><path d="M5 4.800h5"/></g><path d="M10.500 6.500l5 8.500h-10z" fill="#f0d020" stroke="#8a7400" stroke-width=".6"/><path d="M10.500 9.500v3" stroke="#222" stroke-width="1.300"/><circle cx="10.500" cy="13.800" r=".7" fill="#222"/></svg>
<span class="a ui" style="left:702px;top:82px;color:#f0f0f0;"><span class="l">SEH</span>链</span>
<div class="a" style="left:751px;top:75px;width:76px;height:25px;background:#333333;border-radius:3px 3px 0 0;"></div>
<svg class="a" style="left:761px;top:79px" width="16" height="16" viewBox="0 0 16 16"><path d="M3.500 1h9.500c-1 1-1 2-1 3v10.500h-9.500c1-1 1-2 1-3z" fill="#f0f2f8" stroke="#9aa" stroke-width=".6"/><path d="M6.500 7l-1.600 1.600 1.600 1.600M9.500 7l1.600 1.600-1.600 1.600" fill="none" stroke="#5a7ab8" stroke-width="1"/></svg>
<span class="a ui" style="left:786px;top:82px;color:#f0f0f0;">脚本</span>
<div class="a" style="left:829px;top:75px;width:76px;height:25px;background:#333333;border-radius:3px 3px 0 0;"></div>
<svg class="a" style="left:839px;top:79px" width="16" height="16" viewBox="0 0 16 16"><path d="M4.500 1h8l3 3v11h-11z" fill="#f0f4fc" stroke="#7a98d8" stroke-width=".8"/><path d="M7 6h6M7 8h6M7 10h6M7 12h5" stroke="#6a8ad0" stroke-width=".8"/><circle cx="5" cy="6.500" r="4.600" fill="#d82828"/><circle cx="3.600" cy="5" r="1.500" fill="#ff9a9a"/></svg>
<span class="a ui" style="left:864px;top:82px;color:#f0f0f0;">符号</span>
<div class="a" style="left:907px;top:75px;width:88px;height:25px;background:#333333;border-radius:3px 3px 0 0;"></div>
<svg class="a" style="left:917px;top:79px" width="16" height="16" viewBox="0 0 16 16"><path d="M5.500 3.500l-4 4.500 4 4.500M10.500 3.500l4 4.500-4 4.500" fill="none" stroke="#d0d0d0" stroke-width="1.500"/></svg>
<span class="a ui" style="left:942px;top:82px;color:#f0f0f0;">源代码</span>
<div class="a" style="left:997px;top:75px;width:76px;height:25px;background:#333333;border-radius:3px 3px 0 0;"></div>
<svg class="a" style="left:1007px;top:79px" width="16" height="16" viewBox="0 0 16 16"><path d="M1 3l5 4-5 4M5.500 3l5 4-5 4" fill="none" stroke="#3a9ae8" stroke-width="2"/><path d="M9 4.500h3v-2.500l4 5-4 5v-2.500h-3z" fill="#3a9ae8"/></svg>
<span class="a ui" style="left:1032px;top:82px;color:#f0f0f0;">线程</span>
<div class="a" style="left:1075px;top:75px;width:76px;height:25px;background:#333333;border-radius:3px 3px 0 0;"></div>
<svg class="a" style="left:1085px;top:79px" width="16" height="16" viewBox="0 0 16 16"><rect x="5" y="0.500" width="6" height="6" fill="#3a8ee0" stroke="#1a5aa0" stroke-width=".5"/><rect x="1" y="8" width="6.500" height="6.500" fill="#e03030" stroke="#901818" stroke-width=".5"/><rect x="8.500" y="8" width="6.500" height="6.500" fill="#40b040" stroke="#1c701c" stroke-width=".5"/></svg>
<span class="a ui" style="left:1110px;top:82px;color:#f0f0f0;">句柄</span>
<div class="a" style="left:1px;top:103px;width:32px;height:26px;border:1px solid #7a7a7a;border-radius:4px;background:#232323"></div>
<svg class="a" style="left:10px;top:108px" width="15" height="15" viewBox="0 0 15 15"><path d="M2.800 3.200l9.400 9M12.200 3.200l-9.400 9" stroke="#d42626" stroke-width="2.700"/></svg>
<div class="a" style="left:34px;top:103px;width:405px;height:26px;background:#404040;border-radius:3px 3px 0 0;border-bottom:2px solid #a4b6ee"></div>
<svg class="a" style="left:44px;top:106px" width="16" height="16" viewBox="0 0 16 16"><g fill="#cfcfcf"><path d="M2 9.200c0-1.500 1.200-2.300 2.700-2.300s2.700 .8 2.600 2.300c-.1 1.300-1.300 1.900-1.400 3.200-.1 1.200 .2 2.500-1.400 2.500s-1.700-1.300-1.600-2.500c.1-1.300-.9-1.900-.9-3.200z"/><circle cx="2.300" cy="6.300" r=".75"/><circle cx="3.800" cy="5.500" r=".75"/><circle cx="5.400" cy="5.300" r=".75"/><circle cx="6.900" cy="5.900" r=".7"/><g transform="translate(6.900 -5)"><path d="M2 9.200c0-1.500 1.200-2.300 2.700-2.300s2.700 .8 2.600 2.300c-.1 1.300-1.300 1.900-1.400 3.200-.1 1.200 .2 2.500-1.400 2.500s-1.700-1.300-1.600-2.500c.1-1.300-.9-1.900-.9-3.200z"/><circle cx="2.300" cy="6.300" r=".75"/><circle cx="3.800" cy="5.500" r=".75"/><circle cx="5.400" cy="5.300" r=".75"/><circle cx="6.900" cy="5.900" r=".7"/></g></g></svg>
<span class="a ui" style="left:69px;top:109px;color:#9db1ee;"><span class="l">C:\Users\90965\Desktop\</span>新<span class="l">vmp</span>研究<span class="l">\</span>刺杀<span class="l">vmp3.9.4</span>混淆<span class="l">\1.trace64</span></span>
<div class="a" style="left:0;top:130px;width:4px;height:660px;background:#212121"></div>
<div class="vl" style="left:2px;top:130px;height:677px;background:#6a6a6a"></div>
<div class="hl" style="left:2px;top:806px;width:1781px;background:#5c5c5c"></div>
<svg class="a" style="left:8px;top:791px" width="8" height="10" viewBox="0 0 8 10"><path d="M7.500 0.500v9l-7-4.500z" fill="#8c8c8c"/></svg>
<div class="a" style="left:20px;top:791px;width:1730px;height:10px;background:#3e3e3e;border-radius:5px"></div>
<div class="a" style="left:20px;top:791px;width:486px;height:10px;background:#757575;border-radius:5px"></div>
<span class="a mono" style="left:8px;top:808px;font-size:16.6px;line-height:17px;color:#e6e2d8">r9 = <b class="z">0000000</b>14<b class="z">0</b>4575<i class="h">E</i><b class="z">0</b></span>
<span class="a mono" style="left:8px;top:859px;font-size:16.6px;line-height:17px;color:#e6e2d8"><i class="h">T</i>hread<i class="h">ID</i>: 33<b class="z">0</b>76</span>
<div class="hl" style="left:3px;top:881px;width:1780px;background:#555"></div>
<div class="a" style="left:4px;top:882px;width:1817px;height:20px;background:#404040;border-bottom:1px solid #6a6a6a;border-right:1px solid #6a6a6a"></div>
<div class="vl" style="left:2px;top:881px;height:98px;background:#6a6a6a"></div>
<div class="vl" style="left:170px;top:883px;height:96px;background:#666"></div>
<span class="a" style="left:8px;top:881px;font:18px/21px 'Noto Serif CJK SC',serif;color:#c4c4c4">地址</span>
<span class="a" style="left:176px;top:881px;font:18px/21px 'Noto Serif CJK SC',serif;color:#c4c4c4">十六进制</span>
<span class="a mono" style="left:8px;top:902px;width:162px;overflow:hidden;font-size:18.27px;line-height:19px;color:#a8a49c"><b class="z">000000</b><i class="h">CCD</i><b class="z">0</b><i class="h">FCFB</i><b class="z">00</b></span>
<span class="a mono" style="left:175px;top:902px;font-size:18.27px;line-height:19px;color:#f0ece0"><i class="h">A</i><b class="z">0</b> 3<b class="z">0</b> <i class="h">A</i>2 <i class="h">DC</i></span>
<span class="a mono" style="left:307px;top:902px;font-size:18.27px;line-height:19px;color:#f0ece0">61 <b class="z">0</b>2 <b class="z">00</b> <b class="z">00</b></span>
<span class="a mono" style="left:439px;top:902px;font-size:18.27px;line-height:19px;color:#f0ece0"><b class="z">00</b> <b class="z">00</b> 86 <i class="h">DC</i></span>
<span class="a mono" style="left:8px;top:921px;width:162px;overflow:hidden;font-size:18.27px;line-height:19px;color:#a8a49c"><b class="z">000000</b><i class="h">CCD</i><b class="z">0</b><i class="h">FCFB</i>1<b class="z">0</b></span>
<span class="a mono" style="left:175px;top:921px;font-size:18.27px;line-height:19px;color:#f0ece0"><b class="z">00</b> <i class="h">B</i><b class="z">0</b> <i class="h">A</i>1 <i class="h">DC</i></span>
<span class="a mono" style="left:307px;top:921px;font-size:18.27px;line-height:19px;color:#f0ece0">61 <b class="z">0</b>2 <b class="z">00</b> <b class="z">00</b></span>
<span class="a mono" style="left:439px;top:921px;font-size:18.27px;line-height:19px;color:#f0ece0">8<b class="z">0</b> 22 <b class="z">00</b> 4<b class="z">0</b></span>
<span class="a mono" style="left:8px;top:940px;width:162px;overflow:hidden;font-size:18.27px;line-height:19px;color:#a8a49c"><b class="z">000000</b><i class="h">CCD</i><b class="z">0</b><i class="h">FCFB</i>2<b class="z">0</b></span>
<span class="a mono" style="left:175px;top:940px;font-size:18.27px;line-height:19px;color:#f0ece0"><b class="z">0</b>1 <b class="z">00</b> <b class="z">00</b> <b class="z">00</b></span>
<span class="a mono" style="left:307px;top:940px;font-size:18.27px;line-height:19px;color:#f0ece0"><b class="z">00</b> <b class="z">00</b> <b class="z">00</b> <b class="z">00</b></span>
<span class="a mono" style="left:439px;top:940px;font-size:18.27px;line-height:19px;color:#f0ece0"><b class="z">0</b>6 <b class="z">0</b>2 <b class="z">00</b> <b class="z">00</b></span>
<span class="a mono" style="left:8px;top:959px;width:162px;overflow:hidden;font-size:18.27px;line-height:19px;color:#a8a49c"><b class="z">000000</b><i class="h">CCD</i><b class="z">0</b><i class="h">FCFB</i>3<b class="z">0</b></span>
<span class="a mono" style="left:175px;top:959px;font-size:18.27px;line-height:19px;color:#f0ece0"><b class="z">00</b> <b class="z">00</b> <b class="z">00</b> <b class="z">00</b></span>
<span class="a mono" style="left:307px;top:959px;font-size:18.27px;line-height:19px;color:#f0ece0"><b class="z">00</b> <b class="z">00</b> <b class="z">00</b> <b class="z">00</b></span>
<span class="a mono" style="left:439px;top:959px;font-size:18.27px;line-height:19px;color:#f0ece0"><b class="z">00</b> <b class="z">00</b> <b class="z">00</b> <b class="z">00</b></span>
<div class="vl" style="left:303px;top:903px;height:76px;background:#555"></div>
<div class="vl" style="left:435px;top:903px;height:76px;background:#555"></div>
<span class="a ui" style="left:2px;top:990px;color:#e6e6e6;">命令<span class="l">:</span></span>
<div class="a" style="left:38px;top:986px;width:1774px;height:18px;background:#333;border-radius:2px"></div>
<span class="a ui" style="left:18px;top:1015px;color:#e6e6e6;">就绪</span>
<span class="a ui" style="left:66px;top:1015px">载入跟踪内存用时<span style="font-family:'Liberation Sans',sans-serif;letter-spacing:-.6px">260</span>毫秒</span>
<span class="a ui" style="left:1782px;top:1017px;color:#e6e6e6;">已调试时间：<span class="l"> 2:05:19:21</span></span>
<div class="a" style="left:0;top:1031px;width:1920px;height:9px;border-top:1px solid rgba(33,33,33,.5);background:linear-gradient(90deg,#9c2f3c 0px,#a83440 60px,#b07078 250px,#9c3a44 330px,#a85860 440px,#a03540 520px,#a03038 640px,#b03038 720px,#a88088 840px,#a04050 900px,#a05060 1000px,#a84050 1080px,#b03840 1160px,#a04048 1300px,#b07070 1440px,#b04048 1500px,#a83840 1560px,#a87078 1620px,#983038 1700px,#a88088 1760px,#a08890 1840px,#a07880 1920px)"></div>
<div class="a" style="left:367px;top:1037px;width:36px;height:6px;border-radius:3px;background:#d4b8bc"></div>
<svg class="a" style="left:1768px;top:136px" width="10" height="8" viewBox="0 0 10 8"><path d="M5 0.500l4.500 7h-9z" fill="#8c8c8c"/></svg>
<div class="a" style="left:1768px;top:148px;width:10px;height:623px;background:#3d3d3d;border-radius:5px"></div>
<div class="a" style="left:1768px;top:267px;width:10px;height:23px;background:#6a6a6a;border-radius:5px"></div>
<svg class="a" style="left:1768px;top:775px" width="10" height="8" viewBox="0 0 10 8"><path d="M5 7.500l4.500-7h-9z" fill="#8c8c8c"/></svg>
<div class="vl" style="left:1783px;top:130px;height:751px"></div>
<div class="hl" style="left:1783px;top:880px;width:137px"></div>
<div class="a" style="left:1786px;top:131px;width:131px;height:23px;border:1px solid #7a7a7a;border-radius:3px"></div>
<span class="a ui" style="left:1796px;top:136px;color:#e6e6e6;">隐藏</span>
<span class="a mono" style="left:1821px;top:135px;font-size:13.29px;line-height:14px;color:#e6e6e6"><i class="h">FPU</i></span>
<style>.rg u{text-decoration:none;position:relative;top:-2.5px}</style>
<div class="a mono rg" style="left:1786px;top:160px;width:114px;height:702px;overflow:hidden;font-size:13.29px;line-height:14px;font-family:'DejaVu Sans Mono','Noto Sans CJK SC',monospace">
<div class="a" style="left:55px;top:0;width:60px;height:14px;background:#3c3c3c"></div>
<span class="a" style="left:8px;top:0px;color:#aa98ea"><i class="h">RAX</i></span>
<span class="a" style="left:56px;top:0px;color:#ea7f64"><b class="z">0000000000000000</b></span>
<span class="a" style="left:8px;top:14px;color:#aa98ea"><i class="h">RBX</i></span>
<span class="a" style="left:56px;top:14px;color:#ea7f64"><b class="z">0000000000000000</b></span>
<span class="a" style="left:8px;top:28px;color:#aa98ea"><i class="h">RCX</i></span>
<span class="a" style="left:56px;top:28px;color:#ea7f64"><b class="z">0000000000000000</b></span>
<span class="a" style="left:8px;top:42px;color:#aa98ea"><i class="h">RDX</i></span>
<span class="a" style="left:56px;top:42px;color:#ea7f64"><b class="z">0000000000000000</b></span>
<span class="a" style="left:8px;top:56px;color:#aa98ea"><i class="h">RBP</i></span>
<span class="a" style="left:56px;top:56px;color:#ea7f64"><b class="z">0000000000000000</b></span>
<span class="a" style="left:8px;top:70px;color:#aa98ea"><i class="h">RSP</i></span>
<span class="a" style="left:56px;top:70px;color:#ea7f64"><b class="z">000000</b><i class="h">CCD</i><b class="z">0</b><i class="h">FCFA</i>98</span>
<span class="a" style="left:8px;top:84px;color:#aa98ea"><i class="h">RSI</i></span>
<span class="a" style="left:56px;top:84px;color:#ea7f64"><b class="z">0000000</b>14<b class="z">0000000</b></span>
<span class="a" style="left:8px;top:98px;color:#aa98ea"><i class="h">RDI</i></span>
<span class="a" style="left:56px;top:98px;color:#ea7f64"><b class="z">0000000000000000</b></span>
<span class="a" style="left:8px;top:126px;color:#aa98ea"><i class="h">R</i>8</span>
<span class="a" style="left:56px;top:126px;color:#ea7f64"><b class="z">0000000000000000</b></span>
<span class="a" style="left:8px;top:140px;color:#aa98ea"><i class="h">R</i>9</span>
<span class="a" style="left:56px;top:140px;color:#ea7f64"><b class="z">0000000</b>14<b class="z">0</b>4575<i class="h">E</i><b class="z">0</b></span>
<span class="a" style="left:8px;top:154px;color:#aa98ea"><i class="h">R</i>1<b class="z">0</b></span>
<span class="a" style="left:56px;top:154px;color:#ea7f64"><b class="z">0000000</b>14<b class="z">0000000</b></span>
<span class="a" style="left:8px;top:168px;color:#aa98ea"><i class="h">R</i>11</span>
<span class="a" style="left:56px;top:168px;color:#ea7f64"><b class="z">000000</b><i class="h">CCD</i><b class="z">0</b><i class="h">FCFA</i>98</span>
<span class="a" style="left:8px;top:182px;color:#aa98ea"><i class="h">R</i>12</span>
<span class="a" style="left:56px;top:182px;color:#e6e2d0"><b class="z">0000000000000000</b></span>
<span class="a" style="left:8px;top:196px;color:#aa98ea"><i class="h">R</i>13</span>
<span class="a" style="left:56px;top:196px;color:#e6e2d0"><b class="z">0000000000000000</b></span>
<span class="a" style="left:8px;top:210px;color:#aa98ea"><i class="h">R</i>14</span>
<span class="a" style="left:56px;top:210px;color:#e6e2d0"><b class="z">0000000000000000</b></span>
<span class="a" style="left:8px;top:224px;color:#aa98ea"><i class="h">R</i>15</span>
<span class="a" style="left:56px;top:224px;color:#e6e2d0"><b class="z">0000000000000000</b></span>
<span class="a" style="left:8px;top:252px;color:#aa98ea"><i class="h">RIP</i></span>
<span class="a" style="left:56px;top:252px;color:#ea7f64"><b class="z">0000000</b>14<b class="z">0</b>2<i class="h">E</i>8<i class="h">BBD</i></span>
<span class="a" style="left:8px;top:280px;color:#aa98ea"><i class="h">RFLAGS</i></span>
<span class="a" style="left:80px;top:280px;color:#ea7f64"><b class="z">0000000000000</b>246</span>
<span class="a" style="left:8px;top:294px;color:#aa98ea"><i class="h">ZF</i></span>
<span class="a" style="left:32px;top:294px;color:#e6e2d0"><b class="z">0</b></span>
<span class="a" style="left:56px;top:294px;color:#aa98ea"><i class="h">PF</i></span>
<span class="a" style="left:80px;top:294px;color:#ea7f64"><b class="z">0</b></span>
<span class="a" style="left:104px;top:294px;color:#aa98ea"><i class="h">AF</i></span>
<span class="a" style="left:128px;top:294px;color:#e6e2d0"><b class="z">0</b></span>
<span class="a" style="left:8px;top:308px;color:#aa98ea"><i class="h">OF</i></span>
<span class="a" style="left:32px;top:308px;color:#e6e2d0"><b class="z">0</b></span>
<span class="a" style="left:56px;top:308px;color:#aa98ea"><i class="h">SF</i></span>
<span class="a" style="left:80px;top:308px;color:#e6e2d0"><b class="z">0</b></span>
<span class="a" style="left:104px;top:308px;color:#aa98ea"><i class="h">DF</i></span>
<span class="a" style="left:128px;top:308px;color:#e6e2d0"><b class="z">0</b></span>
<span class="a" style="left:8px;top:322px;color:#aa98ea"><i class="h">CF</i></span>
<span class="a" style="left:32px;top:322px;color:#e6e2d0"><b class="z">0</b></span>
<span class="a" style="left:56px;top:322px;color:#aa98ea"><i class="h">TF</i></span>
<span class="a" style="left:80px;top:322px;color:#e6e2d0"><b class="z">0</b></span>
<span class="a" style="left:104px;top:322px;color:#aa98ea"><i class="h">IF</i></span>
<span class="a" style="left:128px;top:322px;color:#e6e2d0"><b class="z">0</b></span>
<span class="a" style="left:8px;top:350px;color:#aa98ea"><i class="h">L</i>ast<i class="h">E</i>rror</span>
<span class="a" style="left:96px;top:350px;color:#e6e2d0"><b class="z">00000000</b> (<i class="h">ERROR</i><u>_</u><i class="h">SUCCESS</i>)</span>
<span class="a" style="left:8px;top:364px;color:#aa98ea"><i class="h">L</i>ast<i class="h">S</i>tatus</span>
<span class="a" style="left:96px;top:364px;color:#e6e2d0"><b class="z">00000000</b> (<i class="h">STATUS</i><u>_</u><i class="h">SUCCESS</i>)</span>
<span class="a" style="left:8px;top:392px;color:#aa98ea"><i class="h">GS</i></span>
<span class="a" style="left:32px;top:392px;color:#e6e2d0"><b class="z">00</b>2<i class="h">B</i></span>
<span class="a" style="left:80px;top:392px;color:#aa98ea"><i class="h">FS</i></span>
<span class="a" style="left:104px;top:392px;color:#e6e2d0"><b class="z">00</b>53</span>
<span class="a" style="left:8px;top:406px;color:#aa98ea"><i class="h">ES</i></span>
<span class="a" style="left:32px;top:406px;color:#e6e2d0"><b class="z">00</b>2<i class="h">B</i></span>
<span class="a" style="left:80px;top:406px;color:#aa98ea"><i class="h">DS</i></span>
<span class="a" style="left:104px;top:406px;color:#e6e2d0"><b class="z">00</b>2<i class="h">B</i></span>
<span class="a" style="left:8px;top:420px;color:#aa98ea"><i class="h">CS</i></span>
<span class="a" style="left:32px;top:420px;color:#e6e2d0"><b class="z">00</b>33</span>
<span class="a" style="left:80px;top:420px;color:#aa98ea"><i class="h">SS</i></span>
<span class="a" style="left:104px;top:420px;color:#e6e2d0"><b class="z">00</b>2<i class="h">B</i></span>
<span class="a" style="left:8px;top:448px;color:#aa98ea"><i class="h">ST</i>(<b class="z">0</b>)</span>
<span class="a" style="left:56px;top:448px;color:#e6e2d0"><b class="z">0000000000000000000</b></span>
<span class="a" style="left:8px;top:462px;color:#aa98ea"><i class="h">ST</i>(1)</span>
<span class="a" style="left:56px;top:462px;color:#e6e2d0"><b class="z">0000000000000000000</b></span>
<span class="a" style="left:8px;top:476px;color:#aa98ea"><i class="h">ST</i>(2)</span>
<span class="a" style="left:56px;top:476px;color:#e6e2d0"><b class="z">0000000000000000000</b></span>
<span class="a" style="left:8px;top:490px;color:#aa98ea"><i class="h">ST</i>(3)</span>
<span class="a" style="left:56px;top:490px;color:#e6e2d0"><b class="z">0000000000000000000</b></span>
<span class="a" style="left:8px;top:504px;color:#aa98ea"><i class="h">ST</i>(4)</span>
<span class="a" style="left:56px;top:504px;color:#e6e2d0"><b class="z">0000000000000000000</b></span>
<span class="a" style="left:8px;top:518px;color:#aa98ea"><i class="h">ST</i>(5)</span>
<span class="a" style="left:56px;top:518px;color:#e6e2d0"><b class="z">0000000000000000000</b></span>
<span class="a" style="left:8px;top:532px;color:#aa98ea"><i class="h">ST</i>(6)</span>
<span class="a" style="left:56px;top:532px;color:#e6e2d0"><b class="z">0000000000000000000</b></span>
<span class="a" style="left:8px;top:546px;color:#aa98ea"><i class="h">ST</i>(7)</span>
<span class="a" style="left:56px;top:546px;color:#e6e2d0"><b class="z">0000000000000000000</b></span>
<span class="a" style="left:8px;top:574px;color:#aa98ea">x87<i class="h">T</i>ag<i class="h">W</i>ord</span>
<span class="a" style="left:96px;top:574px;color:#e6e2d0"><i class="h">FFFF</i></span>
<span class="a" style="left:8px;top:588px;color:#aa98ea">x87<i class="h">TW</i><u>_</u><b class="z">0</b></span>
<span class="a" style="left:72px;top:588px;color:#e6e2d0">3 (空)</span>
<span class="a" style="left:8px;top:602px;color:#aa98ea">x87<i class="h">TW</i><u>_</u>2</span>
<span class="a" style="left:72px;top:602px;color:#e6e2d0">3 (空)</span>
<span class="a" style="left:8px;top:616px;color:#aa98ea">x87<i class="h">TW</i><u>_</u>4</span>
<span class="a" style="left:72px;top:616px;color:#e6e2d0">3 (空)</span>
<span class="a" style="left:8px;top:630px;color:#aa98ea">x87<i class="h">TW</i><u>_</u>6</span>
<span class="a" style="left:72px;top:630px;color:#e6e2d0">3 (空)</span>
<span class="a" style="left:8px;top:658px;color:#aa98ea">x87<i class="h">S</i>tatus<i class="h">W</i>ord</span>
<span class="a" style="left:120px;top:658px;color:#e6e2d0"><b class="z">0000</b></span>
<span class="a" style="left:8px;top:672px;color:#aa98ea">x87<i class="h">SW</i><u>_</u><i class="h">B</i></span>
<span class="a" style="left:80px;top:672px;color:#e6e2d0"><b class="z">0</b></span>
<span class="a" style="left:104px;top:672px;color:#aa98ea">x87<i class="h">SW</i><u>_</u><i class="h">C</i>3</span>
<span class="a" style="left:8px;top:686px;color:#aa98ea">x87<i class="h">SW</i><u>_</u><i class="h">C</i>1</span>
<span class="a" style="left:80px;top:686px;color:#e6e2d0"><b class="z">0</b></span>
<span class="a" style="left:104px;top:686px;color:#aa98ea">x87<i class="h">SW</i><u>_</u><i class="h">C</i>2</span>
<span class="a" style="left:8px;top:700px;color:#aa98ea">x87<i class="h">SW</i><u>_</u><i class="h">C</i><b class="z">0</b></span>
<span class="a" style="left:80px;top:700px;color:#e6e2d0"><b class="z">0</b></span>
<span class="a" style="left:104px;top:700px;color:#aa98ea">x87<i class="h">SW</i><u>_</u><i class="h">ES</i></span>
</div>
<svg class="a" style="left:1904px;top:159px" width="10" height="8" viewBox="0 0 10 8"><path d="M5 0.500l4.500 7h-9z" fill="#8c8c8c"/></svg>
<div class="a" style="left:1904px;top:171px;width:10px;height:675px;background:#3d3d3d;border-radius:5px"></div>
<div class="a" style="left:1904px;top:171px;width:10px;height:376px;background:#707070;border-radius:5px"></div>
<svg class="a" style="left:1904px;top:850px" width="10" height="8" viewBox="0 0 10 8"><path d="M5 7.500l4.500-7h-9z" fill="#8c8c8c"/></svg>
<svg class="a" style="left:1788px;top:866px" width="8" height="10" viewBox="0 0 8 10"><path d="M0.500 5l7-4.500v9z" fill="#8c8c8c"/></svg>
<div class="a" style="left:1800px;top:867px;width:84px;height:8px;background:#3d3d3d;border-radius:4px"></div>
<div class="a" style="left:1800px;top:867px;width:9px;height:8px;background:#6a6a6a;border-radius:4px"></div>
<svg class="a" style="left:1888px;top:866px" width="8" height="10" viewBox="0 0 8 10"><path d="M7.500 5l-7-4.500v9z" fill="#8c8c8c"/></svg>
<div class="vl" style="left:1820px;top:882px;height:96px;background:#555"></div>
<div class="vl" style="left:1840px;top:882px;height:96px;background:#555"></div>
<div class="hl" style="left:1821px;top:978px;width:97px;background:#4a4a4a"></div>
<svg class="a" style="left:1825px;top:887px" width="10" height="8" viewBox="0 0 10 8"><path d="M5 0.500l4.500 7h-9z" fill="#8c8c8c"/></svg>
<div class="a" style="left:1825px;top:899px;width:10px;height:62px;background:#3d3d3d;border-radius:5px"></div>
<div class="a" style="left:1825px;top:925px;width:10px;height:25px;background:#6a6a6a;border-radius:5px"></div>
<svg class="a" style="left:1825px;top:965px" width="10" height="8" viewBox="0 0 10 8"><path d="M5 7.500l4.500-7h-9z" fill="#8c8c8c"/></svg>
<div class="a mono" style="left:1841px;top:882px;width:60px;height:78px;overflow:hidden;font-size:20.76px;line-height:21px;color:#b4b0a6">
<span class="a" style="left:6px;top:2px"><b class="z">0000</b></span>
<span class="a" style="left:6px;top:23px"><b class="z">0000</b></span>
<span class="a" style="left:6px;top:44px"><b class="z">0000</b></span>
<span class="a" style="left:6px;top:65px"><b class="z">0000</b></span>
</div>
<svg class="a" style="left:1903px;top:887px" width="10" height="8" viewBox="0 0 10 8"><path d="M5 0.500l4.500 7h-9z" fill="#8c8c8c"/></svg>
<div class="a" style="left:1903px;top:899px;width:10px;height:43px;background:#3d3d3d;border-radius:5px"></div>
<div class="a" style="left:1903px;top:914px;width:10px;height:22px;background:#6a6a6a;border-radius:5px"></div>
<svg class="a" style="left:1903px;top:946px" width="10" height="8" viewBox="0 0 10 8"><path d="M5 7.500l4.500-7h-9z" fill="#8c8c8c"/></svg>
<svg class="a" style="left:1846px;top:963px" width="8" height="10" viewBox="0 0 8 10"><path d="M0.500 5l7-4.500v9z" fill="#8c8c8c"/></svg>
<div class="a" style="left:1858px;top:964px;width:22px;height:8px;background:#3d3d3d;border-radius:4px"></div>
<div class="a" style="left:1858px;top:964px;width:6px;height:8px;background:#6a6a6a;border-radius:4px"></div>
<svg class="a" style="left:1884px;top:963px" width="8" height="10" viewBox="0 0 8 10"><path d="M7.500 5l-7-4.500v9z" fill="#8c8c8c"/></svg>
<div class="a" style="left:1815px;top:981px;width:103px;height:27px;border:1px solid #3c3c3c;border-radius:3px;background:#212121"></div>
<span class="a ui" style="left:1821px;top:989px;color:#e6e6e6;">默认</span>
<svg class="a" style="left:1906px;top:992px" width="8" height="5" viewBox="0 0 8 5"><path d="M0 0h8l-4 5z" fill="#8c8c8c"/></svg>
<style>.npp{position:absolute;left:549px;top:141px;width:1210px;height:840px;background:#fff;border-radius:8px;overflow:hidden;box-shadow:0 0 0 1px rgba(0,0,0,.45),0 3px 12px rgba(0,0,0,.5)}.nin{position:absolute;left:1px;top:0;width:1208px;height:840px}.npp .t{position:absolute;white-space:pre;font:12px/16px "Liberation Sans","Noto Sans CJK SC",sans-serif;color:#1a1a1a}.ed{position:absolute;left:3px;top:103px;width:1185px;height:711px;overflow:hidden;background:#fff}.ln{position:absolute;left:0;height:27px;width:1186px;white-space:pre;font:22.8px/27px "Liberation Mono",monospace;letter-spacing:.32px;color:#000;-webkit-text-stroke:.45px #fff}.ln .num{position:absolute;top:2px;left:0;width:47px;text-align:right;color:#808080;-webkit-text-stroke:.4px #e4e4e4}.ln .tx{position:absolute;top:2px;left:76px}.cj{display:inline-block;line-height:0;vertical-align:baseline;-webkit-text-stroke:0}.cj i{display:inline-block;font-style:normal;font-family:"Noto Serif CJK SC",serif;font-weight:400;font-size:20.3px;letter-spacing:.91px;line-height:0;transform:translateY(-.5px) scaleX(1.32);transform-origin:0 0;white-space:pre}</style>
<div class="npp"><div class="nin">
<div class="a" style="left:-1px;top:0;width:1210px;height:30px;background:#faf1f2"></div>
<svg class="a" style="left:6px;top:5px" width="18" height="18" viewBox="0 0 18 18"><rect x="1" y="3" width="13" height="14" fill="#fdfdf6" stroke="#555" stroke-width="1"/><rect x="2.500" y="9" width="10" height="6.500" fill="#58c030"/><path d="M3 1.500v3M5.500 1.500v3M8 1.500v3M10.500 1.500v3M13 1.500v3" stroke="#444" stroke-width="1"/><path d="M16.500 1l-7 9-1 2.500 2.400-1.200 7-9z" fill="#f0c040" stroke="#7a5a10" stroke-width=".6"/></svg>
<span class="t" style="left:29px;top:8px">C:\Users\90965\Desktop\新vmp研究\刺杀vmp3.9.4混淆\间接跳转混淆证明情况.txt - Notepad++</span>
<svg class="a" style="left:1080px;top:0" width="128" height="30" viewBox="0 0 128 30"><g stroke="#111" stroke-width="1.100" fill="none"><path d="M10 15.500h10"/><rect x="55.500" y="9.500" width="9" height="9" rx="1"/><path d="M101 9.500l10 10M111 9.500l-10 10"/></g></svg>
<span class="t" style="left:6px;top:33px">文件(F)</span>
<span class="t" style="left:58px;top:33px">编辑(E)</span>
<span class="t" style="left:111px;top:33px">搜索(S)</span>
<span class="t" style="left:164px;top:33px">视图(V)</span>
<span class="t" style="left:218px;top:33px">编码(N)</span>
<span class="t" style="left:274px;top:33px">语言(L)</span>
<span class="t" style="left:326px;top:33px">设置(T)</span>
<span class="t" style="left:379px;top:33px">工具(O)</span>
<span class="t" style="left:435px;top:33px">宏(M)</span>
<span class="t" style="left:481px;top:33px">运行(R)</span>
<span class="t" style="left:535px;top:33px">插件(P)</span>
<span class="t" style="left:587px;top:33px">窗口(W)</span>
<span class="t" style="left:646px;top:33px">?</span>
<span class="t" style="left:1142px;top:33px">+</span>
<span class="t" style="left:1165px;top:32px;font-size:13px">▼</span>
<svg class="a" style="left:1191px;top:34px" width="11" height="11" viewBox="0 0 11 11"><path d="M1 1l9 9M10 1l-9 9" stroke="#333" stroke-width="1"/></svg>
<div class="a" style="left:-1px;top:49px;width:1210px;height:26px;background:#fff;border-top:1px solid #f0f0f0;border-bottom:1px solid #e0e0e0"></div>
<svg class="a" style="left:4.5px;top:53px" width="16" height="16" viewBox="0 0 16 16"><path d="M2.500 0.500h7l4 4v11h-11z" fill="#fbfbfb" stroke="#b0b0b0" stroke-width=".8"/><circle cx="11.500" cy="12" r="3.500" fill="#3cb03c"/><path d="M11.500 10v4M9.500 12h4" stroke="#fff" stroke-width="1.200"/></svg>
<svg class="a" style="left:27.5px;top:53px" width="16" height="16" viewBox="0 0 16 16"><path d="M7 0.500h5l3 3v8h-8z" fill="#cfe0f8" stroke="#7a9ad0" stroke-width=".7"/><path d="M0.500 6.500h5l1 1.500h7v7h-13z" fill="#f0c050" stroke="#c09020" stroke-width=".6"/><path d="M0.500 10.500h13v4.500h-13z" fill="#f8d878"/></svg>
<svg class="a" style="left:50px;top:53px" width="16" height="16" viewBox="0 0 16 16"><path d="M1 1h14v14h-14z" fill="#8c8c8c"/><rect x="4" y="1.500" width="8" height="5" fill="#e8e8e8"/><rect x="3.500" y="9.500" width="9" height="4" fill="#d8d8d8"/></svg>
<svg class="a" style="left:73px;top:53px" width="16" height="16" viewBox="0 0 16 16"><path d="M1 2h9v8h-9z" fill="#9a9a9a"/><path d="M3.500 4.500h9v8h-9z" fill="#8a8a8a" stroke="#fff" stroke-width=".5"/><path d="M6 7h9v8h-9z" fill="#7e7e7e" stroke="#fff" stroke-width=".5"/></svg>
<svg class="a" style="left:96.5px;top:53px" width="16" height="16" viewBox="0 0 16 16"><path d="M2.500 0.500h7l4 4v11h-11z" fill="#fbfbfb" stroke="#b0b0b0" stroke-width=".8"/><path d="M4.500 5h6M4.500 7h6M4.500 9h4" stroke="#bbb" stroke-width=".8"/><circle cx="11.500" cy="12" r="3.500" fill="#f08020"/><path d="M9.500 12h4" stroke="#fff" stroke-width="1.300"/></svg>
<svg class="a" style="left:119.5px;top:53px" width="16" height="16" viewBox="0 0 16 16"><path d="M0.500 0.500h6l2 2v9h-8z" fill="#fbfbfb" stroke="#b0b0b0" stroke-width=".7"/><path d="M3.500 3h6l2.500 2.500v8.500h-8.500z" fill="#fbfbfb" stroke="#b0b0b0" stroke-width=".7"/><circle cx="11.500" cy="12" r="3.500" fill="#f08020"/><path d="M9.500 12h4" stroke="#fff" stroke-width="1.300"/></svg>
<svg class="a" style="left:142px;top:53px" width="16" height="16" viewBox="0 0 16 16"><path d="M4 1h8l1 6h-10z" fill="#d8e4f8" stroke="#7a92c0" stroke-width=".7"/><rect x="0.500" y="6.500" width="15" height="6.500" rx="1.500" fill="#c8ccd4" stroke="#6a7280" stroke-width=".8"/><rect x="3.500" y="11" width="9" height="4" fill="#f8f8f8" stroke="#6a7280" stroke-width=".7"/></svg>
<svg class="a" style="left:172px;top:53px" width="16" height="16" viewBox="0 0 16 16"><path d="M5 1l4.500 9M11 1l-4.500 9" stroke="#8aa0c8" stroke-width="1.400"/><circle cx="4.500" cy="12.500" r="2.300" fill="none" stroke="#d03030" stroke-width="1.500"/><circle cx="10.500" cy="12.500" r="2.300" fill="none" stroke="#d03030" stroke-width="1.500"/></svg>
<svg class="a" style="left:195.5px;top:53px" width="16" height="16" viewBox="0 0 16 16"><path d="M1 0.500h6l3 3v8h-9z" fill="#c8dcf8" stroke="#5a80c8" stroke-width=".8"/><path d="M6 4.500h6l3 3v8h-9z" fill="#dce8fc" stroke="#5a80c8" stroke-width=".8"/></svg>
<svg class="a" style="left:219px;top:53px" width="16" height="16" viewBox="0 0 16 16"><rect x="1" y="2" width="11" height="13" rx="1" fill="#d8a050" stroke="#a06a20" stroke-width=".8"/><rect x="4" y="0.500" width="5" height="3" fill="#b8b8b8"/><path d="M6 5.500h6l3 3v7h-9z" fill="#dce8fc" stroke="#5a80c8" stroke-width=".8"/></svg>
<svg class="a" style="left:249.5px;top:53px" width="16" height="16" viewBox="0 0 16 16"><path d="M3 4h7a3.500 3.500 0 0 1 0 7h-4" fill="none" stroke="#9a9a9a" stroke-width="2.600"/><path d="M7.500 7l-5.500 4 5.500 4z" fill="#9a9a9a"/></svg>
<svg class="a" style="left:272.5px;top:53px" width="16" height="16" viewBox="0 0 16 16"><path d="M11 12h-5a3.500 3.500 0 0 1 0-7h4" fill="none" stroke="#9a9a9a" stroke-width="2.600"/><path d="M9 1l5.500 4-5.500 4z" fill="#9a9a9a"/></svg>
<svg class="a" style="left:302.5px;top:53px" width="16" height="16" viewBox="0 0 16 16"><rect x="1" y="5" width="6" height="9" rx="1" fill="#2a2a2a"/><rect x="9" y="5" width="6" height="9" rx="1" fill="#2a2a2a"/><rect x="2.500" y="1.500" width="3.500" height="4" fill="#3a3a3a"/><rect x="10" y="1.500" width="3.500" height="4" fill="#3a3a3a"/><rect x="6.500" y="6" width="3" height="3" fill="#555"/><rect x="2" y="10" width="4" height="2.500" fill="#888"/><rect x="10" y="10" width="4" height="2.500" fill="#888"/></svg>
<svg class="a" style="left:326.5px;top:53px" width="16" height="16" viewBox="0 0 16 16"><text x="1" y="8" font-family="Liberation Serif,serif" font-style="italic" font-weight="bold" font-size="10" fill="#2a7ad8">b</text><text x="8" y="15" font-family="Liberation Serif,serif" font-style="italic" font-weight="bold" font-size="10" fill="#2a7ad8">a</text><path d="M5.500 7.500l4 3.500" stroke="#2aa040" stroke-width="1.500"/></svg>
<svg class="a" style="left:357.5px;top:53px" width="16" height="16" viewBox="0 0 16 16"><circle cx="6" cy="6" r="4.800" fill="#d8e8f8" stroke="#9ab0d0" stroke-width="1"/><path d="M9.500 9.500l4.500 4.500" stroke="#c89040" stroke-width="2.200"/><path d="M11 2v6M8 5h6" stroke="#30a030" stroke-width="2"/></svg>
<svg class="a" style="left:381px;top:53px" width="16" height="16" viewBox="0 0 16 16"><circle cx="6" cy="6" r="4.800" fill="#d8e8f8" stroke="#9ab0d0" stroke-width="1"/><path d="M9.500 9.500l4.500 4.500" stroke="#c89040" stroke-width="2.200"/><path d="M8 5h6" stroke="#e03030" stroke-width="2"/></svg>
<svg class="a" style="left:411.5px;top:53px" width="16" height="16" viewBox="0 0 16 16"><rect x="0.500" y="1.500" width="11" height="9" fill="#fff" stroke="#9a9a9a" stroke-width="1.200"/><rect x="5.500" y="6" width="10" height="9" fill="#a0a0a0"/><path d="M8 10l2.500-2 2.500 2z" fill="#fff"/></svg>
<svg class="a" style="left:435px;top:53px" width="16" height="16" viewBox="0 0 16 16"><rect x="0.500" y="1.500" width="12" height="9" fill="#fff" stroke="#9a9a9a" stroke-width="1.200"/><path d="M0.500 6h12" stroke="#9a9a9a"/><rect x="5.500" y="6" width="10" height="9" fill="#a0a0a0"/><path d="M8 10l2.500-2 2.500 2z" fill="#fff"/></svg>
<svg class="a" style="left:466px;top:53px" width="16" height="16" viewBox="0 0 16 16"><path d="M1 3h9M1 6h7" stroke="#222" stroke-width="1.200"/><path d="M1 12h8" stroke="#5a90e0" stroke-width="2"/><path d="M11 7h3.500v5h-3" fill="none" stroke="#5a90e0" stroke-width="1.200"/><path d="M12 10l-2.500 2 2.500 2z" fill="#5a90e0"/></svg>
<span class="a" style="left:491px;top:50px;font:bold 17px/20px 'Liberation Sans',sans-serif;color:#4a8ae0">¶</span>
<div class="a" style="left:509px;top:50px;width:23px;height:21px;background:#cce4fa;border:1px solid #90c0f0;border-radius:3px"></div>
<svg class="a" style="left:512px;top:53px" width="16" height="16" viewBox="0 0 16 16"><path d="M2.500 1v14" stroke="#e03060" stroke-width="1" stroke-dasharray="1.500 1.500"/><path d="M1 2h13M5 5h9M5 8h7M1 11h11M5 14h3" stroke="#1020c8" stroke-width="1.800"/></svg>
<svg class="a" style="left:535px;top:53px" width="16" height="16" viewBox="0 0 16 16"><rect x="0.500" y="2" width="15" height="11" fill="#f8f8ff" stroke="#7a9ad8" stroke-width="1"/><rect x="0.500" y="2" width="15" height="2.500" fill="#8ab0e8"/><path d="M9.500 4.500l-4 5h3l-2 5 5.500-6.500h-3z" fill="#f0c030" stroke="#c89010" stroke-width=".4"/></svg>
<svg class="a" style="left:558px;top:53px" width="16" height="16" viewBox="0 0 16 16"><rect x="0.500" y="0.500" width="15" height="15" fill="#b8d080" stroke="#444" stroke-width="1"/><path d="M1 10h14v5h-14z" fill="#e8d060"/><path d="M10 1h5v6h-5z" fill="#90c0e8"/><path d="M4 1l8 14M12 2l-6 8" stroke="#e05020" stroke-width="1.300"/></svg>
<svg class="a" style="left:581px;top:53px" width="16" height="16" viewBox="0 0 16 16"><rect x="0.500" y="1" width="10" height="9" fill="#dce8fc" stroke="#5a80c8" stroke-width="1"/><rect x="3" y="3.500" width="10" height="9" fill="#dce8fc" stroke="#5a80c8" stroke-width="1"/><path d="M7 6.500h5l3 3v6h-8z" fill="#eef4ff" stroke="#5a80c8" stroke-width=".8"/></svg>
<svg class="a" style="left:604px;top:53px" width="16" height="16" viewBox="0 0 16 16"><path d="M4.500 0.500h7l4 4v11h-11z" fill="#fbfbfb" stroke="#888" stroke-width=".8" stroke-dasharray="2 1"/><path d="M8.500 1.500c-3 0-2.500 4-3 7s-1 5-4 5" fill="none" stroke="#d02020" stroke-width="1.800"/><path d="M2.500 8h6" stroke="#d02020" stroke-width="1.500"/></svg>
<svg class="a" style="left:627px;top:53px" width="16" height="16" viewBox="0 0 16 16"><path d="M1 3.500h5l1.500 2h7.500v9h-14z" fill="#f8c8c8" stroke="#d88080" stroke-width=".8"/><path d="M1 7.500h14" stroke="#e8a0a0" stroke-width=".8"/></svg>
<svg class="a" style="left:650px;top:53px" width="16" height="16" viewBox="0 0 16 16"><ellipse cx="8" cy="8" rx="7.500" ry="4.800" fill="#fdf6ec" stroke="#d8b890" stroke-width="1.200"/><circle cx="8" cy="8" r="3.600" fill="#7aa0d8"/><circle cx="8" cy="8" r="1.500" fill="#102040"/></svg>
<svg class="a" style="left:680.5px;top:53px" width="16" height="16" viewBox="0 0 16 16"><rect x="1" y="1.500" width="14" height="13" fill="#fff" stroke="#555" stroke-width="1.200"/><circle cx="8" cy="8" r="3.300" fill="#d00000"/></svg>
<svg class="a" style="left:703px;top:53px" width="16" height="16" viewBox="0 0 16 16"><rect x="1" y="1.500" width="14" height="13" fill="#fff" stroke="#aaa" stroke-width="1.200"/><rect x="4.500" y="4.500" width="7" height="7" fill="#9a9a9a"/></svg>
<svg class="a" style="left:726px;top:53px" width="16" height="16" viewBox="0 0 16 16"><rect x="1" y="1.500" width="14" height="13" fill="#fff" stroke="#aaa" stroke-width="1.200"/><path d="M6 3.500l5.500 4.500-5.500 4.500z" fill="#9a9a9a"/></svg>
<svg class="a" style="left:749.5px;top:53px" width="16" height="16" viewBox="0 0 16 16"><rect x="1" y="1.500" width="14" height="13" fill="#fff" stroke="#555" stroke-width="1.200"/><path d="M3 3.500l5 4.500-5 4.500zM8 3.500l5 4.500-5 4.500z" fill="#3a70d8"/></svg>
<svg class="a" style="left:773px;top:53px" width="16" height="16" viewBox="0 0 16 16"><rect x="0.500" y="0.500" width="11" height="11" fill="#9a9a9a"/><path d="M2 3h8M2 5.500h1.500M4.500 5.500h1.500M2 8h1.500M4.500 8h1.500" stroke="#fff" stroke-width="1.200"/><rect x="6.500" y="6.500" width="9" height="9" fill="#9a9a9a" stroke="#fff" stroke-width=".6"/><path d="M8.500 9.500h2v2.500h3v-2.500" stroke="#fff" stroke-width="1" fill="none"/></svg>
<div class="a" style="left:164.5px;top:52px;width:1px;height:18px;background:#8a8a8a"></div>
<div class="a" style="left:241px;top:52px;width:1px;height:18px;background:#8a8a8a"></div>
<div class="a" style="left:296px;top:52px;width:1px;height:18px;background:#8a8a8a"></div>
<div class="a" style="left:349px;top:52px;width:1px;height:18px;background:#8a8a8a"></div>
<div class="a" style="left:404px;top:52px;width:1px;height:18px;background:#8a8a8a"></div>
<div class="a" style="left:457.5px;top:52px;width:1px;height:18px;background:#8a8a8a"></div>
<div class="a" style="left:672px;top:52px;width:1px;height:18px;background:#8a8a8a"></div>
<div class="a" style="left:-1px;top:75px;width:1210px;height:28px;background:#f0f0f0"></div>
<div class="a" style="left:1px;top:76px;width:186px;height:26px;background:#f4f4f4;border-top:4px solid #f5a030;border-right:2px solid #6a6a6a"></div>
<svg class="a" style="left:5px;top:84px" width="13" height="12" viewBox="0 0 13 12"><rect x="0" y="0" width="13" height="12" fill="#5c94e4"/><rect x="2.500" y="0" width="8" height="4.500" fill="#e8f0ff"/><rect x="2" y="7" width="9" height="5" fill="#a8d088"/></svg>
<span class="a" style="left:24px;top:85px;font:12px/14px 'Liberation Mono','Noto Sans CJK SC',monospace;color:#111">间接跳转混淆证明情况<span class="l">.txt</span></span>
<svg class="a" style="left:169px;top:85px" width="11" height="10" viewBox="0 0 11 10"><rect width="11" height="10" fill="#a85c80"/><path d="M2.500 2l6 6M8.500 2l-6 6" stroke="#fff" stroke-width="1.600"/></svg>
<div class="a" style="left:1px;top:101px;width:1205px;height:717px;border-top:2px solid #727272;border-left:2px solid #7a7a7a;border-bottom:2px solid #a0a0a0;background:#fff"></div>
<div class="ed">
<div class="a" style="left:0;top:0;width:50px;height:711px;background:#e4e4e4"></div>
<div class="a" style="left:50px;top:0;width:25px;height:711px;background:#e0e0e0"></div>
<div class="a" style="left:1186px;top:0;width:0;height:711px"></div>
<div class="ln" style="top:0px"><span class="num">24</span><span class="tx" style="">0x140160ec1 <span class="cj" style="width:196px"><i>是间接跳转混淆</i></span>!  <span class="cj" style="width:168px"><i>真实跳转地址</i></span>: 0x140205f95  0x140160ec1: jmp rdi</span></div>
<div class="ln" style="top:27px"><span class="num">25</span><span class="tx" style="">0x14031fd3f <span class="cj" style="width:196px"><i>是间接跳转混淆</i></span>!  <span class="cj" style="width:168px"><i>真实跳转地址</i></span>: 0x140166a42  0x14031fd3f: jmp rcx</span></div>
<div class="ln" style="top:54px"><span class="num">26</span><span class="tx" style="">0x14043c3a8 <span class="cj" style="width:196px"><i>是间接跳转混淆</i></span>!  <span class="cj" style="width:168px"><i>真实跳转地址</i></span>: 0x140180d3d  0x14043c3a8: jmp rcx</span></div>
<div class="ln" style="top:81px"><span class="num">27</span><span class="tx" style="">0x140490317 <span class="cj" style="width:196px"><i>是间接跳转混淆</i></span>!  <span class="cj" style="width:168px"><i>真实跳转地址</i></span>: 0x1402c6cb8  0x140490317: jmp rbx</span></div>
<div class="ln" style="top:108px"><span class="num">28</span><span class="tx" style="">0x140295926 <span class="cj" style="width:196px"><i>是间接跳转混淆</i></span>!  <span class="cj" style="width:168px"><i>真实跳转地址</i></span>: 0x140293a1f  0x140295926: jmp rcx</span></div>
<div class="ln" style="top:135px"><span class="num">29</span><span class="tx" style="">0x1402528c6 <span class="cj" style="width:196px"><i>是间接跳转混淆</i></span>!  <span class="cj" style="width:168px"><i>真实跳转地址</i></span>: 0x1404870f3  0x1402528c6: jmp r9</span></div>
<div class="ln" style="top:162px"><span class="num">30</span><span class="tx" style="">0x1404a6d6b <span class="cj" style="width:196px"><i>是间接跳转混淆</i></span>!  <span class="cj" style="width:168px"><i>真实跳转地址</i></span>: 0x140493fc5  0x1404a6d6b: jmp rax</span></div>
<div class="ln" style="top:189px"><span class="num">31</span><span class="tx" style="">0x1401fe617 <span class="cj" style="width:196px"><i>是间接跳转混淆</i></span>!  <span class="cj" style="width:168px"><i>真实跳转地址</i></span>: 0x1401aecab  0x1401fe617: jmp rdi</span></div>
<div class="ln" style="top:216px"><span class="num">32</span><span class="tx" style="">0x140451b34 <span class="cj" style="width:196px"><i>是间接跳转混淆</i></span>!  <span class="cj" style="width:168px"><i>真实跳转地址</i></span>: 0x140443d64  0x140451b34: jmp rax</span></div>
<div class="ln" style="top:243px"><span class="num">33</span><span class="tx" style="">0x140426fbd <span class="cj" style="width:196px"><i>是间接跳转混淆</i></span>!  <span class="cj" style="width:168px"><i>真实跳转地址</i></span>: 0x140294de2  0x140426fbd: jmp rcx</span></div>
<div class="ln" style="top:270px"><span class="num">34</span><span class="tx" style="">0x1402997a0 <span class="cj" style="width:196px"><i>是间接跳转混淆</i></span>!  <span class="cj" style="width:168px"><i>真实跳转地址</i></span>: 0x1401cfab5  0x1402997a0: jmp rdi</span></div>
<div class="ln" style="top:297px"><span class="num">35</span><span class="tx" style="">0x1404245d8 <span class="cj" style="width:196px"><i>是间接跳转混淆</i></span>!  <span class="cj" style="width:168px"><i>真实跳转地址</i></span>: 0x140478c43  0x1404245d8: jmp rbp</span></div>
<div class="ln" style="top:324px"><span class="num">36</span><span class="tx" style="">0x1402fbfe5 <span class="cj" style="width:196px"><i>是间接跳转混淆</i></span>!  <span class="cj" style="width:168px"><i>真实跳转地址</i></span>: 0x140129a10  0x1402fbfe5: jmp r9</span></div>
<div class="ln" style="top:351px"><span class="num">37</span><span class="tx" style="">0x14044c541 <span class="cj" style="width:196px"><i>是间接跳转混淆</i></span>!  <span class="cj" style="width:168px"><i>真实跳转地址</i></span>: 0x1401447c8  0x14044c541: jmp rdx</span></div>
<div class="a" style="left:75px;top:378px;width:1110px;height:27px;background:#e8e8ff"></div>
<div class="a" style="left:75px;top:378px;width:155px;height:27px;background:#6cd86c"></div>
<div class="a" style="left:859px;top:378px;width:154px;height:27px;background:#90ee9a"></div>
<div class="a" style="left:229px;top:378px;width:2px;height:27px;background:#6a3fd0"></div>
<div class="ln" style="top:378px"><span class="num">38</span><span class="tx" style=";-webkit-text-stroke-color:#e8e8ff"><span style="-webkit-text-stroke-color:#6cd86c">0x1402e8bbd</span> <span class="cj" style="width:196px"><i>是间接跳转混淆</i></span>!  <span class="cj" style="width:168px"><i>真实跳转地址</i></span>: 0x1404575e0  <span style="-webkit-text-stroke-color:#90ee9a">0x1402e8bbd</span>: jmp r9</span></div>
<div class="ln" style="top:405px"><span class="num">39</span><span class="tx" style="">0x140225ada <span class="cj" style="width:196px"><i>是间接跳转混淆</i></span>!  <span class="cj" style="width:168px"><i>真实跳转地址</i></span>: 0x140322311  0x140225ada: jmp rbp</span></div>
<div class="ln" style="top:432px"><span class="num">40</span><span class="tx" style="">0x1404acea3 <span class="cj" style="width:196px"><i>是间接跳转混淆</i></span>!  <span class="cj" style="width:168px"><i>真实跳转地址</i></span>: 0x1401fd44f  0x1404acea3: jmp rbx</span></div>
<div class="ln" style="top:459px"><span class="num">41</span><span class="tx" style="">0x14031c0c3 <span class="cj" style="width:196px"><i>是间接跳转混淆</i></span>!  <span class="cj" style="width:168px"><i>真实跳转地址</i></span>: 0x1404c2dfc  0x14031c0c3: jmp rbx</span></div>
<div class="ln" style="top:486px"><span class="num">42</span><span class="tx" style="">0x140203f4e <span class="cj" style="width:196px"><i>是间接跳转混淆</i></span>!  <span class="cj" style="width:168px"><i>真实跳转地址</i></span>: 0x1404970f4  0x140203f4e: jmp rdi</span></div>
<div class="ln" style="top:513px"><span class="num">43</span><span class="tx" style="">0x14015f6cd <span class="cj" style="width:196px"><i>是间接跳转混淆</i></span>!  <span class="cj" style="width:168px"><i>真实跳转地址</i></span>: 0x1402db56f  0x14015f6cd: jmp rax</span></div>
<div class="ln" style="top:540px"><span class="num">44</span><span class="tx" style="">0x140252092 <span class="cj" style="width:196px"><i>是间接跳转混淆</i></span>!  <span class="cj" style="width:168px"><i>真实跳转地址</i></span>: 0x140477442  0x140252092: jmp rbp</span></div>
<div class="ln" style="top:567px"><span class="num">45</span><span class="tx" style="">0x14042f5b4 <span class="cj" style="width:196px"><i>是间接跳转混淆</i></span>!  <span class="cj" style="width:168px"><i>真实跳转地址</i></span>: 0x140422751  0x14042f5b4: jmp rbp</span></div>
<div class="ln" style="top:594px"><span class="num">46</span><span class="tx" style="">0x1404814e0 <span class="cj" style="width:196px"><i>是间接跳转混淆</i></span>!  <span class="cj" style="width:168px"><i>真实跳转地址</i></span>: 0x140450be8  0x1404814e0: jmp rbp</span></div>
<div class="ln" style="top:621px"><span class="num">47</span><span class="tx" style="">0x1402b0050 <span class="cj" style="width:196px"><i>是间接跳转混淆</i></span>!  <span class="cj" style="width:168px"><i>真实跳转地址</i></span>: 0x1401e7287  0x1402b0050: jmp rcx</span></div>
<div class="ln" style="top:648px"><span class="num">48</span><span class="tx" style="">0x140309d6d <span class="cj" style="width:196px"><i>是间接跳转混淆</i></span>!  <span class="cj" style="width:168px"><i>真实跳转地址</i></span>: 0x140412650  0x140309d6d: jmp rbp</span></div>
<div class="ln" style="top:675px"><span class="num">49</span><span class="tx" style="">0x14016e7ea <span class="cj" style="width:196px"><i>是间接跳转混淆</i></span>!  <span class="cj" style="width:168px"><i>真实跳转地址</i></span>: 0x1402b8aaa  0x14016e7ea: jmp rdi</span></div>
<div class="ln" style="top:702px"><span class="num">50</span><span class="tx" style="">0x1401a6370 <span class="cj" style="width:196px"><i>是间接跳转混淆</i></span>!  <span class="cj" style="width:168px"><i>真实跳转地址</i></span>: 0x14025d932  0x1401a6370: jmp r9</span></div>
</div>
<div class="a" style="left:1189px;top:103px;width:17px;height:712px;background:#f0f0f0"></div>
<div class="a" style="left:1196px;top:206px;width:2px;height:100px;background:#8a8a8a;border-radius:1px"></div>
<div class="a" style="left:-1px;top:818px;width:1210px;height:22px;background:#f0f0f0"></div>
<span class="t" style="left:2px;top:822px;color:#222;font-size:13.3px">Normal text file</span>
<span class="t" style="left:452px;top:822px;color:#222;font-size:13.3px">length : 13,907</span>
<span class="t" style="left:553px;top:822px;color:#222;font-size:13.3px">lines : 153</span>
<span class="t" style="left:673px;top:822px;color:#222;font-size:13.3px">Ln : 38</span>
<span class="t" style="left:727px;top:822px;color:#222;font-size:13.3px">Col : 12</span>
<span class="t" style="left:787px;top:822px;color:#222;font-size:13.3px">Sel : 11 | 1</span>
<span class="t" style="left:933px;top:822px;color:#222;font-size:13.3px;letter-spacing:-.45px">Windows (CR LF)</span>
<span class="t" style="left:1043px;top:822px;color:#222;font-size:13.3px">UTF-8</span>
<span class="t" style="left:1163px;top:822px;color:#222;font-size:13.3px">INS</span>
<div class="a" style="left:448px;top:820px;width:1px;height:18px;background:#d0d0d0"></div>
<div class="a" style="left:668px;top:820px;width:1px;height:18px;background:#d0d0d0"></div>
<div class="a" style="left:928px;top:820px;width:1px;height:18px;background:#d0d0d0"></div>
<div class="a" style="left:1038px;top:820px;width:1px;height:18px;background:#d0d0d0"></div>
<div class="a" style="left:1158px;top:820px;width:1px;height:18px;background:#d0d0d0"></div>
<div class="a" style="left:1188px;top:820px;width:1px;height:18px;background:#d0d0d0"></div>
<svg class="a" style="left:1194px;top:826px" width="12" height="12" viewBox="0 0 12 12"><g fill="#b0b0b0"><rect x="8" y="8" width="2" height="2"/><rect x="8" y="4" width="2" height="2"/><rect x="4" y="8" width="2" height="2"/><rect x="8" y="0" width="2" height="2"/><rect x="4" y="4" width="2" height="2"/><rect x="0" y="8" width="2" height="2"/></g></svg>
</div></div>
<svg class="a" style="left:1709px;top:944px" width="70" height="74" viewBox="-35 -37 70 74"><g stroke="rgba(205,205,205,.2)" stroke-linecap="butt" fill="none"><g transform="rotate(0)" stroke-width="4"><path d="M0 0V-34M0 -19l-10 -9M0 -19l10 -9"/></g><g transform="rotate(60)" stroke-width="2"><path d="M0 0V-34M0 -19l-10 -9M0 -19l10 -9"/></g><g transform="rotate(120)" stroke-width="4"><path d="M0 0V-34M0 -19l-10 -9M0 -19l10 -9"/></g><g transform="rotate(180)" stroke-width="4"><path d="M0 0V-34M0 -19l-10 -9M0 -19l10 -9"/></g><g transform="rotate(240)" stroke-width="4"><path d="M0 0V-34M0 -19l-10 -9M0 -19l10 -9"/></g><g transform="rotate(300)" stroke-width="4"><path d="M0 0V-34M0 -19l-10 -9M0 -19l10 -9"/></g></g></svg>
<span class="a" style="left:1785px;top:938px;font:400 54px/76px 'Noto Sans CJK SC',sans-serif;color:rgba(205,205,205,.2);letter-spacing:5px">看雪</span>
</body></html>
